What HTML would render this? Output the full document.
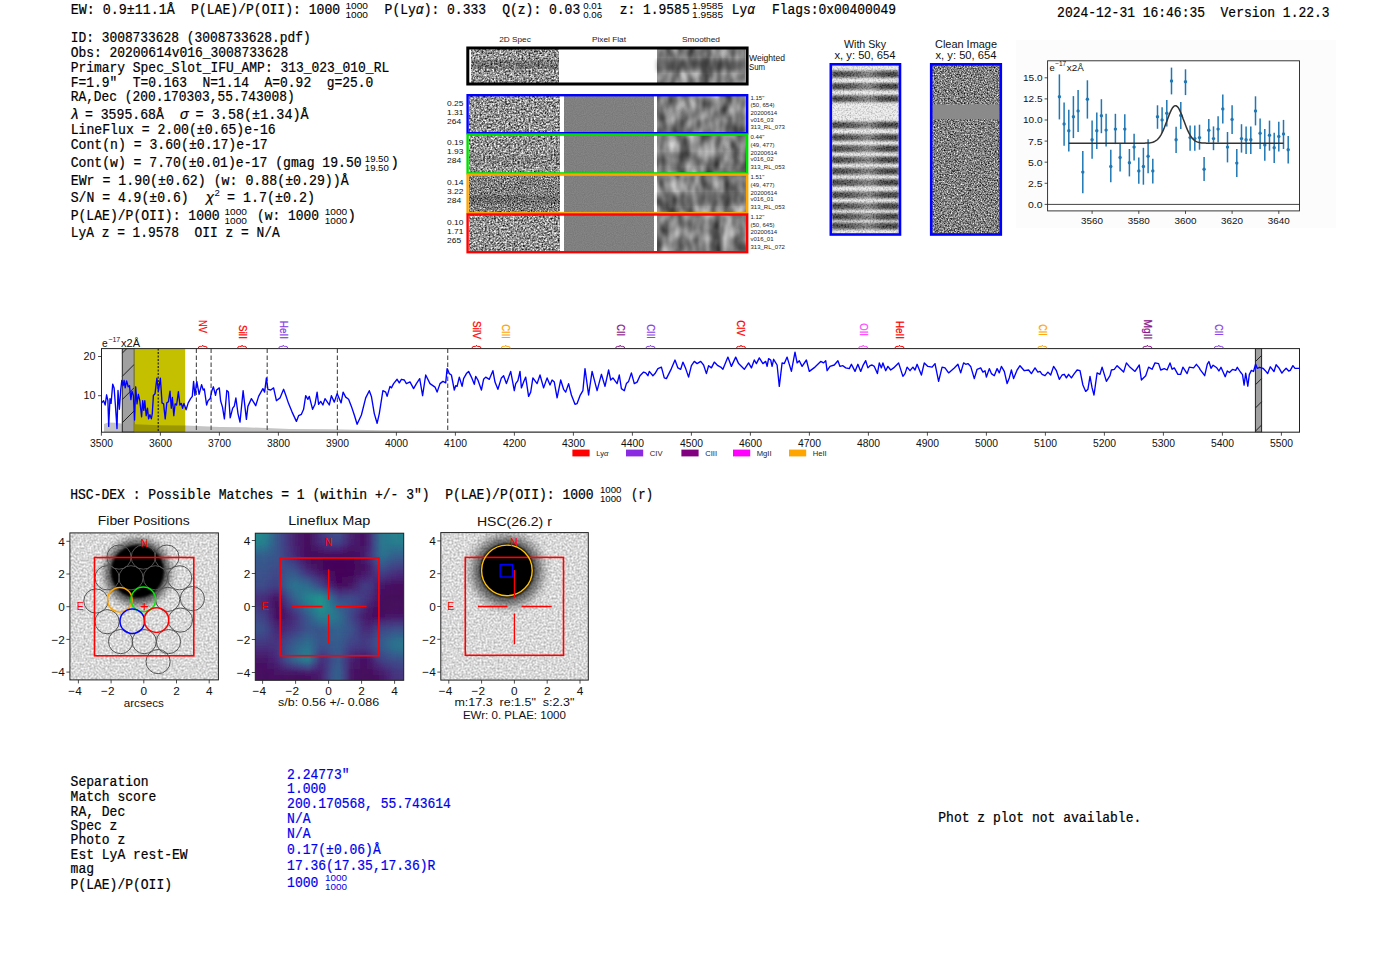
<!DOCTYPE html>
<html><head><meta charset="utf-8"><title>report</title>
<style>html,body{margin:0;padding:0;background:#fff;}body{width:1400px;height:953px;overflow:hidden;}svg{display:block;} text{white-space:pre;}</style>
</head><body>
<svg width="1400" height="953" viewBox="0 0 1400 953">

<defs>
 <filter id="nzA" x="0" y="0" width="1" height="1" color-interpolation-filters="sRGB">
  <feTurbulence type="fractalNoise" baseFrequency="0.55" numOctaves="2" seed="4" result="t"/>
  <feColorMatrix in="t" type="matrix" values="1.5 0 0 0 -0.18  1.5 0 0 0 -0.18  1.5 0 0 0 -0.18  0 0 0 0 1"/>
 </filter>
 <filter id="nzB" x="0" y="0" width="1" height="1" color-interpolation-filters="sRGB">
  <feTurbulence type="fractalNoise" baseFrequency="0.55" numOctaves="2" seed="11" result="t"/>
  <feColorMatrix in="t" type="matrix" values="1.5 0 0 0 -0.18  1.5 0 0 0 -0.18  1.5 0 0 0 -0.18  0 0 0 0 1"/>
 </filter>
 <filter id="nzC" x="0" y="0" width="1" height="1" color-interpolation-filters="sRGB">
  <feTurbulence type="fractalNoise" baseFrequency="0.7" numOctaves="2" seed="21" result="t"/>
  <feColorMatrix in="t" type="matrix" values="1.4 0 0 0 -0.2  1.4 0 0 0 -0.2  1.4 0 0 0 -0.2  0 0 0 0 1"/>
 </filter>
 <filter id="nzL" x="0" y="0" width="1" height="1" color-interpolation-filters="sRGB">
  <feTurbulence type="fractalNoise" baseFrequency="0.5" numOctaves="1" seed="5" result="t"/>
  <feColorMatrix in="t" type="matrix" values="0.5 0 0 0 0.6  0.5 0 0 0 0.6  0.5 0 0 0 0.6  0 0 0 0 1"/>
 </filter>
 <filter id="smA" x="0" y="0" width="1" height="1" color-interpolation-filters="sRGB">
  <feTurbulence type="fractalNoise" baseFrequency="0.09 0.05" numOctaves="2" seed="8" result="t"/>
  <feColorMatrix in="t" type="matrix" values="0.85 0 0 0 0.08  0.85 0 0 0 0.08  0.85 0 0 0 0.08  0 0 0 0 1"/>
 </filter>
 <filter id="smB" x="0" y="0" width="1" height="1" color-interpolation-filters="sRGB">
  <feTurbulence type="fractalNoise" baseFrequency="0.09 0.05" numOctaves="2" seed="15" result="t"/>
  <feColorMatrix in="t" type="matrix" values="0.85 0 0 0 0.08  0.85 0 0 0 0.08  0.85 0 0 0 0.08  0 0 0 0 1"/>
 </filter>
 <filter id="flat" x="0" y="0" width="1" height="1" color-interpolation-filters="sRGB">
  <feTurbulence type="fractalNoise" baseFrequency="0.9" numOctaves="1" seed="2" result="t"/>
  <feColorMatrix in="t" type="matrix" values="0.12 0 0 0 0.44  0.12 0 0 0 0.44  0.12 0 0 0 0.44  0 0 0 0 1"/>
 </filter>
 <filter id="blur2"><feGaussianBlur stdDeviation="2"/></filter>
 <filter id="blur3"><feGaussianBlur stdDeviation="3"/></filter>
 <filter id="blur1"><feGaussianBlur stdDeviation="1.2"/></filter>
 <clipPath id="clipSpec"><rect x="101.5" y="348.6" width="1198" height="83.6"/></clipPath>
 <clipPath id="clipFP"><rect x="69.9" y="532.9" width="148.5" height="147"/></clipPath>
 <clipPath id="clipLF"><rect x="255.3" y="533.2" width="148.4" height="147.1"/></clipPath>
 <clipPath id="clipHSC"><rect x="440.8" y="532.6" width="147.5" height="147.5"/></clipPath>
 <clipPath id="clipFit"><rect x="1047.6" y="60.8" width="251.9" height="150.1"/></clipPath>
 <linearGradient id="skyg" x1="0" x2="1" y1="0" y2="0">
  <stop offset="0" stop-color="#000" stop-opacity="1"/><stop offset="0.3" stop-color="#000" stop-opacity="0.85"/>
  <stop offset="0.55" stop-color="#000" stop-opacity="0.6"/><stop offset="0.75" stop-color="#000" stop-opacity="0.95"/>
  <stop offset="1" stop-color="#000" stop-opacity="1"/></linearGradient>
 <filter id="nzW" x="0" y="0" width="1" height="1" color-interpolation-filters="sRGB">
  <feTurbulence type="fractalNoise" baseFrequency="0.6" numOctaves="2" seed="9" result="t"/>
  <feColorMatrix in="t" type="matrix" values="1.8 0 0 0 -0.05  1.8 0 0 0 -0.05  1.8 0 0 0 -0.05  0 0 0 0 1"/>
 </filter>
</defs>
<rect width="1400" height="953" fill="#fff"/>
<text x="70.7" y="13.9" font-family="'Liberation Mono', monospace" font-size="14.0" textLength="104.0" lengthAdjust="spacingAndGlyphs" stroke="#000" stroke-width="0.22">EW: 0.9±11.1Å</text>
<text x="191.1" y="13.9" font-family="'Liberation Mono', monospace" font-size="14.0" textLength="149.0" lengthAdjust="spacingAndGlyphs" stroke="#000" stroke-width="0.22">P(LAE)/P(OII): 1000</text>
<text x="345.4" y="8.6" font-family="'Liberation Sans', sans-serif" font-size="8.6" textLength="22.5" lengthAdjust="spacingAndGlyphs">1000</text>
<text x="345.4" y="17.5" font-family="'Liberation Sans', sans-serif" font-size="8.6" textLength="22.5" lengthAdjust="spacingAndGlyphs">1000</text>
<text x="384.6" y="13.9" font-family="'Liberation Mono', monospace" font-size="14.0" textLength="101.5" lengthAdjust="spacingAndGlyphs" stroke="#000" stroke-width="0.22">P(Ly<tspan font-style="italic">α</tspan>): 0.333</text>
<text x="502.2" y="13.9" font-family="'Liberation Mono', monospace" font-size="14.0" textLength="78.0" lengthAdjust="spacingAndGlyphs" stroke="#000" stroke-width="0.22">Q(z): 0.03</text>
<text x="583.2" y="8.6" font-family="'Liberation Sans', sans-serif" font-size="8.6" textLength="19.0" lengthAdjust="spacingAndGlyphs">0.01</text>
<text x="583.2" y="17.5" font-family="'Liberation Sans', sans-serif" font-size="8.6" textLength="19.0" lengthAdjust="spacingAndGlyphs">0.06</text>
<text x="619.7" y="13.9" font-family="'Liberation Mono', monospace" font-size="14.0" textLength="70.0" lengthAdjust="spacingAndGlyphs" stroke="#000" stroke-width="0.22">z: 1.9585</text>
<text x="692.1" y="8.6" font-family="'Liberation Sans', sans-serif" font-size="8.6" textLength="31.0" lengthAdjust="spacingAndGlyphs">1.9585</text>
<text x="692.1" y="17.5" font-family="'Liberation Sans', sans-serif" font-size="8.6" textLength="31.0" lengthAdjust="spacingAndGlyphs">1.9585</text>
<text x="731.8" y="13.9" font-family="'Liberation Mono', monospace" font-size="14.0" textLength="23.0" lengthAdjust="spacingAndGlyphs" stroke="#000" stroke-width="0.22">Ly<tspan font-style="italic">α</tspan></text>
<text x="772.0" y="13.9" font-family="'Liberation Mono', monospace" font-size="14.0" textLength="124.0" lengthAdjust="spacingAndGlyphs" stroke="#000" stroke-width="0.22">Flags:0x00400049</text>
<text x="1057.1" y="16.8" font-family="'Liberation Mono', monospace" font-size="14.0" textLength="272.5" lengthAdjust="spacingAndGlyphs" stroke="#000" stroke-width="0.22">2024-12-31 16:46:35  Version 1.22.3</text>
<text x="70.7" y="42.2" font-family="'Liberation Mono', monospace" font-size="14.0" textLength="240.0" lengthAdjust="spacingAndGlyphs" stroke="#000" stroke-width="0.22">ID: 3008733628 (3008733628.pdf)</text>
<text x="70.7" y="56.5" font-family="'Liberation Mono', monospace" font-size="14.0" textLength="217.5" lengthAdjust="spacingAndGlyphs" stroke="#000" stroke-width="0.22">Obs: 20200614v016_3008733628</text>
<text x="70.7" y="71.7" font-family="'Liberation Mono', monospace" font-size="14.0" textLength="318.5" lengthAdjust="spacingAndGlyphs" stroke="#000" stroke-width="0.22">Primary Spec_Slot_IFU_AMP: 313_023_010_RL</text>
<text x="70.7" y="86.7" font-family="'Liberation Mono', monospace" font-size="14.0" textLength="302.5" lengthAdjust="spacingAndGlyphs" stroke="#000" stroke-width="0.22">F=1.9"  T=0.163  N=1.14  A=0.92  g=25.0</text>
<text x="70.7" y="101.3" font-family="'Liberation Mono', monospace" font-size="14.0" textLength="224.0" lengthAdjust="spacingAndGlyphs" stroke="#000" stroke-width="0.22">RA,Dec (200.170303,55.743008)</text>
<text x="70.7" y="118.7" font-family="'Liberation Mono', monospace" font-size="14.0" font-style="italic" stroke="#000" stroke-width="0.22">λ</text>
<text x="84.9" y="118.7" font-family="'Liberation Mono', monospace" font-size="14.0" textLength="79.0" lengthAdjust="spacingAndGlyphs" stroke="#000" stroke-width="0.22">= 3595.68Å</text>
<text x="180.0" y="118.7" font-family="'Liberation Mono', monospace" font-size="14.0" font-style="italic" stroke="#000" stroke-width="0.22">σ</text>
<text x="195.6" y="118.7" font-family="'Liberation Mono', monospace" font-size="14.0" textLength="113.0" lengthAdjust="spacingAndGlyphs" stroke="#000" stroke-width="0.22">= 3.58(±1.34)Å</text>
<text x="70.7" y="133.9" font-family="'Liberation Mono', monospace" font-size="14.0" textLength="205.0" lengthAdjust="spacingAndGlyphs" stroke="#000" stroke-width="0.22">LineFlux = 2.00(±0.65)e-16</text>
<text x="70.7" y="149.1" font-family="'Liberation Mono', monospace" font-size="14.0" textLength="197.0" lengthAdjust="spacingAndGlyphs" stroke="#000" stroke-width="0.22">Cont(n) = 3.60(±0.17)e-17</text>
<text x="70.7" y="167.4" font-family="'Liberation Mono', monospace" font-size="14.0" textLength="291.0" lengthAdjust="spacingAndGlyphs" stroke="#000" stroke-width="0.22">Cont(w) = 7.70(±0.01)e-17 (gmag 19.50</text>
<text x="364.8" y="162.1" font-family="'Liberation Sans', sans-serif" font-size="8.6" textLength="24.0" lengthAdjust="spacingAndGlyphs">19.50</text>
<text x="364.8" y="171.0" font-family="'Liberation Sans', sans-serif" font-size="8.6" textLength="24.0" lengthAdjust="spacingAndGlyphs">19.50</text>
<text x="390.5" y="167.4" font-family="'Liberation Mono', monospace" font-size="14.0" stroke="#000" stroke-width="0.22">)</text>
<text x="70.7" y="184.9" font-family="'Liberation Mono', monospace" font-size="14.0" textLength="278.0" lengthAdjust="spacingAndGlyphs" stroke="#000" stroke-width="0.22">EWr = 1.90(±0.62) (w: 0.88(±0.29))Å</text>
<text x="70.7" y="202.2" font-family="'Liberation Mono', monospace" font-size="14.0" textLength="118.0" lengthAdjust="spacingAndGlyphs" stroke="#000" stroke-width="0.22">S/N = 4.9(±0.6)</text>
<text x="205.7" y="202.2" font-family="'Liberation Mono', monospace" font-size="14.0" font-style="italic" stroke="#000" stroke-width="0.22">χ</text>
<text x="214.5" y="196.0" font-family="'Liberation Sans', sans-serif" font-size="9.6">2</text>
<text x="227.1" y="202.2" font-family="'Liberation Mono', monospace" font-size="14.0" textLength="88.0" lengthAdjust="spacingAndGlyphs" stroke="#000" stroke-width="0.22">= 1.7(±0.2)</text>
<text x="70.7" y="220.4" font-family="'Liberation Mono', monospace" font-size="14.0" textLength="149.0" lengthAdjust="spacingAndGlyphs" stroke="#000" stroke-width="0.22">P(LAE)/P(OII): 1000</text>
<text x="224.4" y="215.1" font-family="'Liberation Sans', sans-serif" font-size="8.6" textLength="22.5" lengthAdjust="spacingAndGlyphs">1000</text>
<text x="224.4" y="224.0" font-family="'Liberation Sans', sans-serif" font-size="8.6" textLength="22.5" lengthAdjust="spacingAndGlyphs">1000</text>
<text x="257.1" y="220.4" font-family="'Liberation Mono', monospace" font-size="14.0" textLength="62.0" lengthAdjust="spacingAndGlyphs" stroke="#000" stroke-width="0.22">(w: 1000</text>
<text x="324.7" y="215.1" font-family="'Liberation Sans', sans-serif" font-size="8.6" textLength="22.5" lengthAdjust="spacingAndGlyphs">1000</text>
<text x="324.7" y="224.0" font-family="'Liberation Sans', sans-serif" font-size="8.6" textLength="22.5" lengthAdjust="spacingAndGlyphs">1000</text>
<text x="347.5" y="220.4" font-family="'Liberation Mono', monospace" font-size="14.0" stroke="#000" stroke-width="0.22">)</text>
<text x="70.7" y="236.7" font-family="'Liberation Mono', monospace" font-size="14.0" textLength="209.0" lengthAdjust="spacingAndGlyphs" stroke="#000" stroke-width="0.22">LyA z = 1.9578  OII z = N/A</text>
<text x="515.0" y="41.6" font-family="'Liberation Sans', sans-serif" font-size="8.0" text-anchor="middle" textLength="31.5" lengthAdjust="spacingAndGlyphs" fill="#222">2D Spec</text>
<text x="609.0" y="41.6" font-family="'Liberation Sans', sans-serif" font-size="8.0" text-anchor="middle" textLength="34.0" lengthAdjust="spacingAndGlyphs" fill="#222">Pixel Flat</text>
<text x="701.0" y="41.6" font-family="'Liberation Sans', sans-serif" font-size="8.0" text-anchor="middle" textLength="38.0" lengthAdjust="spacingAndGlyphs" fill="#222">Smoothed</text>
<rect x="471.7" y="48" width="87.3" height="36" fill="#888" filter="url(#nzA)"/>
<rect x="471.7" y="60" width="87.3" height="9" fill="#000" opacity="0.2"/>
<rect x="657" y="48" width="87.5" height="36" fill="#888" filter="url(#smA)"/>
<rect x="657" y="60" width="87.5" height="11" fill="#000" opacity="0.35" filter="url(#blur2)"/>
<rect x="467.8" y="48" width="279.3" height="36" fill="none" stroke="#000" stroke-width="3"/>
<text x="749.0" y="61.2" font-family="'Liberation Sans', sans-serif" font-size="8.2" textLength="36.0" lengthAdjust="spacingAndGlyphs" fill="#111">Weighted</text>
<text x="749.0" y="69.6" font-family="'Liberation Sans', sans-serif" font-size="8.2" textLength="16.0" lengthAdjust="spacingAndGlyphs" fill="#111">Sum</text>
<rect x="469.5" y="95.1" width="90.5" height="37.2" fill="#888" filter="url(#nzB)"/>
<rect x="564" y="95.1" width="89.5" height="37.2" fill="#808080" filter="url(#flat)"/>
<rect x="657" y="95.1" width="88.5" height="37.2" fill="#888" filter="url(#smB)"/>
<rect x="467.6" y="95.2" width="279.6" height="38.0" fill="none" stroke="#0000ff" stroke-width="2.4"/>
<text x="447.0" y="105.7" font-family="'Liberation Sans', sans-serif" font-size="7.8" textLength="16.4" lengthAdjust="spacingAndGlyphs" fill="#111">0.25</text>
<text x="447.0" y="114.6" font-family="'Liberation Sans', sans-serif" font-size="7.8" textLength="16.4" lengthAdjust="spacingAndGlyphs" fill="#111">1.31</text>
<text x="447.0" y="123.5" font-family="'Liberation Sans', sans-serif" font-size="7.8" textLength="14.1" lengthAdjust="spacingAndGlyphs" fill="#111">264</text>
<text x="750.5" y="99.9" font-family="'Liberation Sans', sans-serif" font-size="6.0" fill="#222">1.15"</text>
<text x="750.5" y="107.2" font-family="'Liberation Sans', sans-serif" font-size="6.0" fill="#222">(50, 654)</text>
<text x="750.5" y="115.1" font-family="'Liberation Sans', sans-serif" font-size="6.0" fill="#222">20200614</text>
<text x="750.5" y="121.9" font-family="'Liberation Sans', sans-serif" font-size="6.0" fill="#222">v016_03</text>
<text x="750.5" y="129.3" font-family="'Liberation Sans', sans-serif" font-size="6.0" fill="#222">313_RL_073</text>
<rect x="469.5" y="134.5" width="90.5" height="38.0" fill="#888" filter="url(#nzA)"/>
<rect x="564" y="134.5" width="89.5" height="38.0" fill="#808080" filter="url(#flat)"/>
<rect x="657" y="134.5" width="88.5" height="38.0" fill="#888" filter="url(#smA)"/>
<rect x="469.5" y="155.5" width="90" height="8.8" fill="#000" opacity="0.08"/>
<rect x="657" y="153.5" width="88" height="11.2" fill="#000" opacity="0.11199999999999999" filter="url(#blur2)"/>
<rect x="467.6" y="134.6" width="279.6" height="38.8" fill="none" stroke="#00e000" stroke-width="2.4"/>
<text x="447.0" y="145.1" font-family="'Liberation Sans', sans-serif" font-size="7.8" textLength="16.4" lengthAdjust="spacingAndGlyphs" fill="#111">0.19</text>
<text x="447.0" y="154.0" font-family="'Liberation Sans', sans-serif" font-size="7.8" textLength="16.4" lengthAdjust="spacingAndGlyphs" fill="#111">1.93</text>
<text x="447.0" y="162.9" font-family="'Liberation Sans', sans-serif" font-size="7.8" textLength="14.1" lengthAdjust="spacingAndGlyphs" fill="#111">284</text>
<text x="750.5" y="139.3" font-family="'Liberation Sans', sans-serif" font-size="6.0" fill="#222">0.44"</text>
<text x="750.5" y="146.6" font-family="'Liberation Sans', sans-serif" font-size="6.0" fill="#222">(49, 477)</text>
<text x="750.5" y="154.5" font-family="'Liberation Sans', sans-serif" font-size="6.0" fill="#222">20200614</text>
<text x="750.5" y="161.3" font-family="'Liberation Sans', sans-serif" font-size="6.0" fill="#222">v016_02</text>
<text x="750.5" y="168.7" font-family="'Liberation Sans', sans-serif" font-size="6.0" fill="#222">313_RL_053</text>
<rect x="469.5" y="174.5" width="90.5" height="37.7" fill="#888" filter="url(#nzC)"/>
<rect x="564" y="174.5" width="89.5" height="37.7" fill="#808080" filter="url(#flat)"/>
<rect x="657" y="174.5" width="88.5" height="37.7" fill="#888" filter="url(#smB)"/>
<rect x="469.5" y="195.3" width="90" height="8.7" fill="#000" opacity="0.15"/>
<rect x="657" y="193.3" width="88" height="11.1" fill="#000" opacity="0.21" filter="url(#blur2)"/>
<rect x="467.6" y="174.6" width="279.6" height="38.5" fill="none" stroke="#ffa500" stroke-width="2.4"/>
<text x="447.0" y="185.1" font-family="'Liberation Sans', sans-serif" font-size="7.8" textLength="16.4" lengthAdjust="spacingAndGlyphs" fill="#111">0.14</text>
<text x="447.0" y="194.0" font-family="'Liberation Sans', sans-serif" font-size="7.8" textLength="16.4" lengthAdjust="spacingAndGlyphs" fill="#111">3.22</text>
<text x="447.0" y="202.9" font-family="'Liberation Sans', sans-serif" font-size="7.8" textLength="14.1" lengthAdjust="spacingAndGlyphs" fill="#111">284</text>
<text x="750.5" y="179.3" font-family="'Liberation Sans', sans-serif" font-size="6.0" fill="#222">1.51"</text>
<text x="750.5" y="186.6" font-family="'Liberation Sans', sans-serif" font-size="6.0" fill="#222">(49, 477)</text>
<text x="750.5" y="194.5" font-family="'Liberation Sans', sans-serif" font-size="6.0" fill="#222">20200614</text>
<text x="750.5" y="201.3" font-family="'Liberation Sans', sans-serif" font-size="6.0" fill="#222">v016_01</text>
<text x="750.5" y="208.7" font-family="'Liberation Sans', sans-serif" font-size="6.0" fill="#222">313_RL_053</text>
<rect x="469.5" y="214.4" width="90.5" height="36.9" fill="#888" filter="url(#nzB)"/>
<rect x="564" y="214.4" width="89.5" height="36.9" fill="#808080" filter="url(#flat)"/>
<rect x="657" y="214.4" width="88.5" height="36.9" fill="#888" filter="url(#smA)"/>
<rect x="467.6" y="214.5" width="279.6" height="37.7" fill="none" stroke="#ff0000" stroke-width="2.4"/>
<text x="447.0" y="225.0" font-family="'Liberation Sans', sans-serif" font-size="7.8" textLength="16.4" lengthAdjust="spacingAndGlyphs" fill="#111">0.10</text>
<text x="447.0" y="233.9" font-family="'Liberation Sans', sans-serif" font-size="7.8" textLength="16.4" lengthAdjust="spacingAndGlyphs" fill="#111">1.71</text>
<text x="447.0" y="242.8" font-family="'Liberation Sans', sans-serif" font-size="7.8" textLength="14.1" lengthAdjust="spacingAndGlyphs" fill="#111">265</text>
<text x="750.5" y="219.2" font-family="'Liberation Sans', sans-serif" font-size="6.0" fill="#222">1.12"</text>
<text x="750.5" y="226.5" font-family="'Liberation Sans', sans-serif" font-size="6.0" fill="#222">(50, 645)</text>
<text x="750.5" y="234.4" font-family="'Liberation Sans', sans-serif" font-size="6.0" fill="#222">20200614</text>
<text x="750.5" y="241.2" font-family="'Liberation Sans', sans-serif" font-size="6.0" fill="#222">v016_01</text>
<text x="750.5" y="248.6" font-family="'Liberation Sans', sans-serif" font-size="6.0" fill="#222">313_RL_072</text>
<text x="865.0" y="48.3" font-family="'Liberation Sans', sans-serif" font-size="10.4" text-anchor="middle" textLength="42.0" lengthAdjust="spacingAndGlyphs" fill="#111">With Sky</text>
<text x="865.0" y="58.5" font-family="'Liberation Sans', sans-serif" font-size="10.4" text-anchor="middle" textLength="61.0" lengthAdjust="spacingAndGlyphs" fill="#111">x, y: 50, 654</text>
<text x="966.0" y="48.3" font-family="'Liberation Sans', sans-serif" font-size="10.4" text-anchor="middle" textLength="62.0" lengthAdjust="spacingAndGlyphs" fill="#111">Clean Image</text>
<text x="966.0" y="58.5" font-family="'Liberation Sans', sans-serif" font-size="10.4" text-anchor="middle" textLength="61.0" lengthAdjust="spacingAndGlyphs" fill="#111">x, y: 50, 654</text>
<rect x="832" y="64.8" width="66.8" height="168.8" fill="#e8e8e8"/>
<g filter="url(#blur1)"><rect x="832" y="70.8" width="66.8" height="6.8" fill="url(#skyg)"/><rect x="832" y="83.0" width="66.8" height="6.8" fill="url(#skyg)"/><rect x="832" y="95.3" width="66.8" height="6.8" fill="url(#skyg)"/><rect x="832" y="121.7" width="66.8" height="6.8" fill="url(#skyg)"/><rect x="832" y="134.0" width="66.8" height="6.8" fill="url(#skyg)"/><rect x="832" y="145.3" width="66.8" height="6.8" fill="url(#skyg)"/><rect x="832" y="156.6" width="66.8" height="6.8" fill="url(#skyg)"/><rect x="832" y="167.9" width="66.8" height="6.8" fill="url(#skyg)"/><rect x="832" y="179.2" width="66.8" height="6.8" fill="url(#skyg)"/><rect x="832" y="191.5" width="66.8" height="6.8" fill="url(#skyg)"/><rect x="832" y="202.8" width="66.8" height="6.8" fill="url(#skyg)"/><rect x="832" y="213.2" width="66.8" height="6.8" fill="url(#skyg)"/><rect x="832" y="222.6" width="66.8" height="6.8" fill="url(#skyg)"/></g>
<rect x="832" y="64.8" width="66.8" height="168.8" fill="#888" filter="url(#nzW)" opacity="0.32"/>
<rect x="830.8" y="64.3" width="69.2" height="170.2" fill="none" stroke="#0000ff" stroke-width="2.6"/>
<rect x="932.3" y="64.8" width="67.5" height="168.8" fill="#888" filter="url(#nzC)"/>
<rect x="932.3" y="104.5" width="67.5" height="14.5" fill="#8a8a8a"/>
<rect x="931.2" y="64.3" width="69.6" height="170.2" fill="none" stroke="#0000ff" stroke-width="2.6"/>
<rect x="1016" y="40" width="320" height="188" fill="#fcfcfc"/>
<rect x="1047.6" y="60.8" width="251.9" height="150.1" fill="#fff"/>
<line x1="1047.6" y1="204.4" x2="1299.5" y2="204.4" stroke="#444" stroke-width="1"/>
<g stroke="#1f77b4" stroke-width="1.5"><line x1="1059.4" y1="74.4" x2="1059.4" y2="119.4"/><line x1="1064.1" y1="102.4" x2="1064.1" y2="145.8"/><line x1="1068.8" y1="109.7" x2="1068.8" y2="151.4"/><line x1="1073.4" y1="96.1" x2="1073.4" y2="138.1"/><line x1="1078.1" y1="90.0" x2="1078.1" y2="132.0"/><line x1="1082.8" y1="150.9" x2="1082.8" y2="193.2"/><line x1="1087.4" y1="80.3" x2="1087.4" y2="118.6"/><line x1="1092.1" y1="120.6" x2="1092.1" y2="158.7"/><line x1="1096.8" y1="112.6" x2="1096.8" y2="149.0"/><line x1="1101.4" y1="99.2" x2="1101.4" y2="133.2"/><line x1="1106.1" y1="113.8" x2="1106.1" y2="146.6"/><line x1="1110.8" y1="149.7" x2="1110.8" y2="182.3"/><line x1="1115.4" y1="113.8" x2="1115.4" y2="144.1"/><line x1="1120.1" y1="143.4" x2="1120.1" y2="171.6"/><line x1="1124.8" y1="114.3" x2="1124.8" y2="143.4"/><line x1="1129.4" y1="149.0" x2="1129.4" y2="176.4"/><line x1="1134.1" y1="133.7" x2="1134.1" y2="160.4"/><line x1="1138.8" y1="157.5" x2="1138.8" y2="183.7"/><line x1="1143.4" y1="147.8" x2="1143.4" y2="184.7"/><line x1="1148.1" y1="139.3" x2="1148.1" y2="173.3"/><line x1="1152.8" y1="158.7" x2="1152.8" y2="183.5"/><line x1="1157.5" y1="105.3" x2="1157.5" y2="128.8"/><line x1="1162.1" y1="107.2" x2="1162.1" y2="132.7"/><line x1="1166.8" y1="99.9" x2="1166.8" y2="126.4"/><line x1="1171.5" y1="67.6" x2="1171.5" y2="94.4"/><line x1="1176.1" y1="126.7" x2="1176.1" y2="153.1"/><line x1="1180.8" y1="102.1" x2="1180.8" y2="129.1"/><line x1="1185.5" y1="69.3" x2="1185.5" y2="95.1"/><line x1="1190.1" y1="125.4" x2="1190.1" y2="150.7"/><line x1="1194.8" y1="125.4" x2="1194.8" y2="150.7"/><line x1="1199.5" y1="124.7" x2="1199.5" y2="149.7"/><line x1="1204.1" y1="157.0" x2="1204.1" y2="181.1"/><line x1="1208.8" y1="119.1" x2="1208.8" y2="142.4"/><line x1="1213.5" y1="126.4" x2="1213.5" y2="150.2"/><line x1="1218.1" y1="116.2" x2="1218.1" y2="142.4"/><line x1="1222.8" y1="94.4" x2="1222.8" y2="123.5"/><line x1="1227.5" y1="132.0" x2="1227.5" y2="162.4"/><line x1="1232.1" y1="105.3" x2="1232.1" y2="133.9"/><line x1="1236.8" y1="149.0" x2="1236.8" y2="176.9"/><line x1="1241.5" y1="124.2" x2="1241.5" y2="152.6"/><line x1="1246.1" y1="126.4" x2="1246.1" y2="153.9"/><line x1="1250.8" y1="126.4" x2="1250.8" y2="153.9"/><line x1="1255.5" y1="96.3" x2="1255.5" y2="125.4"/><line x1="1260.1" y1="118.6" x2="1260.1" y2="149.0"/><line x1="1264.8" y1="129.1" x2="1264.8" y2="160.7"/><line x1="1269.5" y1="120.6" x2="1269.5" y2="150.7"/><line x1="1274.2" y1="132.7" x2="1274.2" y2="163.1"/><line x1="1278.8" y1="121.8" x2="1278.8" y2="151.4"/><line x1="1283.5" y1="119.9" x2="1283.5" y2="149.0"/><line x1="1288.2" y1="136.1" x2="1288.2" y2="163.6"/></g>
<g fill="#1f77b4"><circle cx="1059.4" cy="96.8" r="1.7"/><circle cx="1064.1" cy="124.0" r="1.7"/><circle cx="1068.8" cy="130.8" r="1.7"/><circle cx="1073.4" cy="116.7" r="1.7"/><circle cx="1078.1" cy="110.9" r="1.7"/><circle cx="1082.8" cy="172.1" r="1.7"/><circle cx="1087.4" cy="99.2" r="1.7"/><circle cx="1092.1" cy="139.8" r="1.7"/><circle cx="1096.8" cy="130.8" r="1.7"/><circle cx="1101.4" cy="115.7" r="1.7"/><circle cx="1106.1" cy="130.1" r="1.7"/><circle cx="1110.8" cy="166.5" r="1.7"/><circle cx="1115.4" cy="129.1" r="1.7"/><circle cx="1120.1" cy="157.5" r="1.7"/><circle cx="1124.8" cy="129.1" r="1.7"/><circle cx="1129.4" cy="162.8" r="1.7"/><circle cx="1134.1" cy="147.1" r="1.7"/><circle cx="1138.8" cy="170.9" r="1.7"/><circle cx="1143.4" cy="166.5" r="1.7"/><circle cx="1148.1" cy="156.3" r="1.7"/><circle cx="1152.8" cy="170.9" r="1.7"/><circle cx="1157.5" cy="116.7" r="1.7"/><circle cx="1162.1" cy="119.9" r="1.7"/><circle cx="1166.8" cy="113.3" r="1.7"/><circle cx="1171.5" cy="81.0" r="1.7"/><circle cx="1176.1" cy="139.8" r="1.7"/><circle cx="1180.8" cy="115.5" r="1.7"/><circle cx="1185.5" cy="81.7" r="1.7"/><circle cx="1190.1" cy="137.6" r="1.7"/><circle cx="1194.8" cy="138.6" r="1.7"/><circle cx="1199.5" cy="137.6" r="1.7"/><circle cx="1204.1" cy="169.2" r="1.7"/><circle cx="1208.8" cy="130.3" r="1.7"/><circle cx="1213.5" cy="138.6" r="1.7"/><circle cx="1218.1" cy="129.1" r="1.7"/><circle cx="1222.8" cy="108.9" r="1.7"/><circle cx="1227.5" cy="147.1" r="1.7"/><circle cx="1232.1" cy="119.4" r="1.7"/><circle cx="1236.8" cy="163.1" r="1.7"/><circle cx="1241.5" cy="138.6" r="1.7"/><circle cx="1246.1" cy="139.8" r="1.7"/><circle cx="1250.8" cy="139.8" r="1.7"/><circle cx="1255.5" cy="110.9" r="1.7"/><circle cx="1260.1" cy="133.2" r="1.7"/><circle cx="1264.8" cy="144.9" r="1.7"/><circle cx="1269.5" cy="135.2" r="1.7"/><circle cx="1274.2" cy="147.8" r="1.7"/><circle cx="1278.8" cy="136.4" r="1.7"/><circle cx="1283.5" cy="133.9" r="1.7"/><circle cx="1288.2" cy="149.7" r="1.7"/></g>
<polyline fill="none" stroke="#333" stroke-width="1.5" points="1068.8,143.2 1069.9,143.2 1071.1,143.2 1072.3,143.2 1073.4,143.2 1074.6,143.2 1075.8,143.2 1076.9,143.2 1078.1,143.2 1079.3,143.2 1080.4,143.2 1081.6,143.2 1082.8,143.2 1083.9,143.2 1085.1,143.2 1086.3,143.2 1087.4,143.2 1088.6,143.2 1089.8,143.2 1090.9,143.2 1092.1,143.2 1093.3,143.2 1094.4,143.2 1095.6,143.2 1096.8,143.2 1097.9,143.2 1099.1,143.2 1100.3,143.2 1101.4,143.2 1102.6,143.2 1103.8,143.2 1104.9,143.2 1106.1,143.2 1107.3,143.2 1108.4,143.2 1109.6,143.2 1110.8,143.2 1111.9,143.2 1113.1,143.2 1114.3,143.2 1115.4,143.2 1116.6,143.2 1117.8,143.2 1118.9,143.2 1120.1,143.2 1121.3,143.2 1122.4,143.2 1123.6,143.2 1124.8,143.2 1125.9,143.2 1127.1,143.2 1128.3,143.2 1129.4,143.2 1130.6,143.2 1131.8,143.2 1132.9,143.2 1134.1,143.2 1135.3,143.2 1136.4,143.2 1137.6,143.2 1138.8,143.2 1139.9,143.2 1141.1,143.2 1142.3,143.2 1143.4,143.2 1144.6,143.2 1145.8,143.1 1146.9,143.1 1148.1,143.0 1149.3,142.9 1150.4,142.8 1151.6,142.6 1152.8,142.3 1154.0,141.8 1155.1,141.2 1156.3,140.5 1157.5,139.5 1158.6,138.2 1159.8,136.7 1161.0,134.8 1162.1,132.6 1163.3,130.1 1164.5,127.3 1165.6,124.3 1166.8,121.2 1168.0,118.0 1169.1,114.9 1170.3,112.1 1171.5,109.7 1172.6,107.7 1173.8,106.4 1175.0,105.7 1176.1,105.8 1177.3,106.6 1178.5,108.0 1179.6,110.1 1180.8,112.7 1182.0,115.5 1183.1,118.7 1184.3,121.8 1185.5,125.0 1186.6,127.9 1187.8,130.7 1189.0,133.1 1190.1,135.2 1191.3,137.0 1192.5,138.5 1193.6,139.7 1194.8,140.7 1196.0,141.4 1197.1,141.9 1198.3,142.3 1199.5,142.6 1200.6,142.8 1201.8,143.0 1203.0,143.0 1204.1,143.1 1205.3,143.1 1206.5,143.2 1207.6,143.2 1208.8,143.2 1210.0,143.2 1211.1,143.2 1212.3,143.2 1213.5,143.2 1214.6,143.2 1215.8,143.2 1217.0,143.2 1218.1,143.2 1219.3,143.2 1220.5,143.2 1221.6,143.2 1222.8,143.2 1224.0,143.2 1225.1,143.2 1226.3,143.2 1227.5,143.2 1228.6,143.2 1229.8,143.2 1231.0,143.2 1232.1,143.2 1233.3,143.2 1234.5,143.2 1235.6,143.2 1236.8,143.2 1238.0,143.2 1239.1,143.2 1240.3,143.2 1241.5,143.2 1242.6,143.2 1243.8,143.2 1245.0,143.2 1246.1,143.2 1247.3,143.2 1248.5,143.2 1249.6,143.2 1250.8,143.2 1252.0,143.2 1253.1,143.2 1254.3,143.2 1255.5,143.2 1256.6,143.2 1257.8,143.2 1259.0,143.2 1260.1,143.2 1261.3,143.2 1262.5,143.2 1263.6,143.2 1264.8,143.2 1266.0,143.2 1267.1,143.2 1268.3,143.2 1269.5,143.2 1270.7,143.2 1271.8,143.2 1273.0,143.2 1274.2,143.2 1275.3,143.2 1276.5,143.2 1277.7,143.2 1278.8,143.2 1280.0,143.2 1281.2,143.2 1282.3,143.2 1283.5,143.2"/>
<rect x="1047.6" y="60.8" width="251.9" height="150.1" fill="none" stroke="#222" stroke-width="0.9"/>
<line x1="1044.6" y1="204.4" x2="1047.6" y2="204.4" stroke="#222" stroke-width="0.8"/>
<text x="1042.5" y="207.8" font-family="'Liberation Sans', sans-serif" font-size="9.6" text-anchor="end" textLength="14.5" lengthAdjust="spacingAndGlyphs" fill="#111">0.0</text>
<line x1="1044.6" y1="183.3" x2="1047.6" y2="183.3" stroke="#222" stroke-width="0.8"/>
<text x="1042.5" y="186.7" font-family="'Liberation Sans', sans-serif" font-size="9.6" text-anchor="end" textLength="14.5" lengthAdjust="spacingAndGlyphs" fill="#111">2.5</text>
<line x1="1044.6" y1="162.2" x2="1047.6" y2="162.2" stroke="#222" stroke-width="0.8"/>
<text x="1042.5" y="165.6" font-family="'Liberation Sans', sans-serif" font-size="9.6" text-anchor="end" textLength="14.5" lengthAdjust="spacingAndGlyphs" fill="#111">5.0</text>
<line x1="1044.6" y1="141.1" x2="1047.6" y2="141.1" stroke="#222" stroke-width="0.8"/>
<text x="1042.5" y="144.5" font-family="'Liberation Sans', sans-serif" font-size="9.6" text-anchor="end" textLength="14.5" lengthAdjust="spacingAndGlyphs" fill="#111">7.5</text>
<line x1="1044.6" y1="120.0" x2="1047.6" y2="120.0" stroke="#222" stroke-width="0.8"/>
<text x="1042.5" y="123.4" font-family="'Liberation Sans', sans-serif" font-size="9.6" text-anchor="end" textLength="19.5" lengthAdjust="spacingAndGlyphs" fill="#111">10.0</text>
<line x1="1044.6" y1="98.9" x2="1047.6" y2="98.9" stroke="#222" stroke-width="0.8"/>
<text x="1042.5" y="102.3" font-family="'Liberation Sans', sans-serif" font-size="9.6" text-anchor="end" textLength="19.5" lengthAdjust="spacingAndGlyphs" fill="#111">12.5</text>
<line x1="1044.6" y1="77.8" x2="1047.6" y2="77.8" stroke="#222" stroke-width="0.8"/>
<text x="1042.5" y="81.2" font-family="'Liberation Sans', sans-serif" font-size="9.6" text-anchor="end" textLength="19.5" lengthAdjust="spacingAndGlyphs" fill="#111">15.0</text>
<line x1="1092.1" y1="210.9" x2="1092.1" y2="213.9" stroke="#222" stroke-width="0.8"/>
<text x="1092.1" y="224.2" font-family="'Liberation Sans', sans-serif" font-size="9.6" text-anchor="middle" textLength="22.0" lengthAdjust="spacingAndGlyphs" fill="#111">3560</text>
<line x1="1138.8" y1="210.9" x2="1138.8" y2="213.9" stroke="#222" stroke-width="0.8"/>
<text x="1138.8" y="224.2" font-family="'Liberation Sans', sans-serif" font-size="9.6" text-anchor="middle" textLength="22.0" lengthAdjust="spacingAndGlyphs" fill="#111">3580</text>
<line x1="1185.5" y1="210.9" x2="1185.5" y2="213.9" stroke="#222" stroke-width="0.8"/>
<text x="1185.5" y="224.2" font-family="'Liberation Sans', sans-serif" font-size="9.6" text-anchor="middle" textLength="22.0" lengthAdjust="spacingAndGlyphs" fill="#111">3600</text>
<line x1="1232.1" y1="210.9" x2="1232.1" y2="213.9" stroke="#222" stroke-width="0.8"/>
<text x="1232.1" y="224.2" font-family="'Liberation Sans', sans-serif" font-size="9.6" text-anchor="middle" textLength="22.0" lengthAdjust="spacingAndGlyphs" fill="#111">3620</text>
<line x1="1278.8" y1="210.9" x2="1278.8" y2="213.9" stroke="#222" stroke-width="0.8"/>
<text x="1278.8" y="224.2" font-family="'Liberation Sans', sans-serif" font-size="9.6" text-anchor="middle" textLength="22.0" lengthAdjust="spacingAndGlyphs" fill="#111">3640</text>
<text x="1049.5" y="70.7" font-family="'Liberation Sans', sans-serif" font-size="9.4" fill="#111">e</text>
<text x="1055.2" y="66.2" font-family="'Liberation Sans', sans-serif" font-size="6.6" textLength="11.0" lengthAdjust="spacingAndGlyphs" fill="#111">−17</text>
<text x="1066.8" y="70.7" font-family="'Liberation Sans', sans-serif" font-size="9.4" textLength="17.0" lengthAdjust="spacingAndGlyphs" fill="#111">x2Å</text>
<g clip-path="url(#clipSpec)">
<polygon fill="#c4c4c4" points="101.5,432.2 104.0,432.2 104.0,424.0 108.0,422.5 115.0,422.8 125.0,424.0 140.0,424.5 160.0,425.3 185.0,425.6 220.0,427.0 245.0,427.2 290.0,429.0 330.0,429.3 380.0,430.3 440.0,430.8 560.0,431.2 800.0,431.5 1299.5,431.7 1299.5,432.2"/>
<rect x="122.3" y="348.6" width="12.0" height="83.6" fill="#a0a0a0" stroke="#222" stroke-width="1"/>
<g stroke="#222" stroke-width="1"><line x1="122.3" y1="422.7" x2="134.3" y2="410.7"/><line x1="122.3" y1="399.5" x2="134.3" y2="387.5"/><line x1="122.3" y1="376.3" x2="134.3" y2="364.3"/><line x1="122.3" y1="353.1" x2="134.3" y2="341.1"/><line x1="122.3" y1="329.9" x2="134.3" y2="317.9"/></g>
<rect x="134.5" y="348.6" width="50.7" height="83.6" fill="#c4c000"/>
<polygon fill="#9a9700" points="134.5,432.2 134.5,424.3 160,425.3 185.2,425.6 185.2,432.2"/>
<rect x="1255.4" y="348.6" width="6.2" height="83.6" fill="#a0a0a0" stroke="#222" stroke-width="1"/>
<g stroke="#222" stroke-width="1"><line x1="1255.4" y1="431.2" x2="1261.6" y2="425.0"/><line x1="1255.4" y1="408.0" x2="1261.6" y2="401.8"/><line x1="1255.4" y1="384.8" x2="1261.6" y2="378.6"/><line x1="1255.4" y1="361.6" x2="1261.6" y2="355.4"/><line x1="1255.4" y1="338.4" x2="1261.6" y2="332.2"/></g>
<line x1="196.4" y1="348.6" x2="196.4" y2="432.2" stroke="#555" stroke-width="1.2" stroke-dasharray="4.5,2.5"/>
<line x1="211.1" y1="348.6" x2="211.1" y2="432.2" stroke="#555" stroke-width="1.2" stroke-dasharray="4.5,2.5"/>
<line x1="267.2" y1="348.6" x2="267.2" y2="432.2" stroke="#555" stroke-width="1.2" stroke-dasharray="4.5,2.5"/>
<line x1="337.4" y1="348.6" x2="337.4" y2="432.2" stroke="#555" stroke-width="1.2" stroke-dasharray="4.5,2.5"/>
<line x1="447.7" y1="348.6" x2="447.7" y2="432.2" stroke="#555" stroke-width="1.2" stroke-dasharray="4.5,2.5"/>
<line x1="158.2" y1="348.6" x2="158.2" y2="432.2" stroke="#111" stroke-width="1.1" stroke-dasharray="2,1.5"/>
<polyline fill="none" stroke="#0000ff" stroke-width="1.35" stroke-linejoin="round" points="101.6,402.9 103.6,400.7 105.2,405.0 106.6,394.8 107.9,400.7 108.7,426.4 110.0,398.6 111.1,403.4 112.7,384.1 114.1,387.9 115.4,405.0 117.0,428.6 118.0,390.5 119.4,409.3 120.7,390.0 121.8,380.4 123.1,385.7 124.1,380.4 125.2,387.9 126.6,380.9 128.2,386.8 129.5,385.7 130.9,399.6 132.0,391.1 133.4,395.4 134.6,420.0 135.7,386.8 137.0,403.9 138.4,394.3 139.8,400.7 141.6,416.8 142.7,400.7 143.8,410.4 144.8,400.7 146.2,415.7 147.5,408.2 148.6,418.9 149.9,414.6 151.3,418.9 152.3,413.6 153.4,395.4 155.0,393.8 156.9,378.2 158.4,391.1 160.4,378.2 162.0,402.9 163.6,403.9 165.2,418.9 166.8,402.9 168.4,401.8 170.0,391.1 171.3,408.2 172.4,397.5 173.8,415.7 175.1,403.9 176.6,405.0 178.4,391.6 179.9,405.0 181.3,403.4 182.6,408.2 183.9,403.4 186.1,409.8 188.2,402.9 190.6,398.6 192.3,396.4 193.6,381.4 194.9,395.4 196.8,381.4 199.1,394.3 201.6,384.6 203.2,390.0 204.3,388.9 206.6,405.0 208.0,400.7 210.2,398.6 211.8,391.1 213.4,386.8 215.5,395.4 216.6,390.0 219.3,387.9 220.6,400.7 222.5,407.1 224.4,418.9 226.8,390.5 228.4,392.1 230.2,417.9 232.7,408.2 234.3,406.1 235.9,398.0 238.0,413.6 240.0,422.1 243.1,390.7 246.4,419.3 247.9,406.4 251.4,398.6 253.6,402.1 255.7,405.7 258.6,396.4 262.9,388.6 264.6,392.1 266.4,377.9 267.9,389.3 270.7,390.0 273.6,387.9 276.4,400.7 280.0,397.9 283.6,389.3 285.7,395.0 288.6,403.6 292.1,412.1 296.4,421.4 298.6,415.7 301.4,414.3 303.6,409.3 305.7,395.7 307.9,399.3 309.3,396.4 312.6,409.3 315.0,404.3 317.1,392.1 318.6,404.3 320.7,401.4 322.9,405.0 325.0,398.6 327.4,402.1 329.3,405.0 331.4,395.7 334.3,402.1 337.1,393.6 341.1,402.9 343.1,392.1 345.7,397.1 348.6,399.3 351.4,406.4 354.3,415.0 357.1,424.3 361.4,415.0 365.7,397.9 369.3,390.7 371.4,396.4 374.3,413.6 377.1,423.3 379.3,413.6 382.9,390.7 385.7,392.1 387.1,396.4 390.0,386.4 391.4,387.9 393.6,383.6 397.1,379.3 399.3,382.9 401.4,379.3 404.3,380.0 406.4,383.6 410.0,381.9 413.6,388.6 416.4,383.6 419.7,378.6 422.6,395.7 425.7,375.0 430.0,383.6 435.0,387.1 437.1,392.1 440.0,383.6 442.9,381.4 445.7,382.9 447.1,368.6 449.3,373.6 451.4,375.0 454.3,390.0 455.7,385.7 457.1,386.4 459.3,377.1 462.1,386.4 463.6,378.6 466.4,373.6 468.6,371.4 471.4,377.1 474.3,384.3 475.7,376.4 477.9,380.0 481.4,390.0 483.6,379.3 485.7,377.1 489.3,379.3 492.9,370.7 495.0,382.1 497.9,389.3 501.4,377.9 503.6,375.7 506.4,383.6 510.7,371.4 514.3,390.7 515.7,383.6 517.9,380.7 520.0,371.4 521.4,387.9 523.6,382.1 525.7,377.1 528.6,396.4 530.7,392.1 532.9,377.9 537.1,383.6 540.0,375.0 543.6,387.9 547.1,377.9 550.0,385.0 552.1,380.0 554.3,382.1 557.1,397.9 560.7,380.0 563.6,389.3 565.7,392.1 568.6,383.6 571.4,395.0 575.0,404.3 577.1,403.6 580.0,395.7 582.9,390.7 585.0,368.6 588.6,395.0 592.1,371.4 597.1,390.7 601.4,374.3 605.0,386.4 608.6,370.0 610.7,380.0 612.9,377.9 617.1,383.6 619.3,375.0 621.4,388.6 624.3,390.7 626.4,383.6 628.6,381.4 631.4,372.9 634.3,383.6 637.1,382.1 640.0,375.7 643.6,372.1 645.7,372.9 647.9,375.7 649.3,371.4 652.9,375.7 655.0,373.6 657.9,368.6 661.4,367.1 664.3,377.9 666.4,378.6 671.4,368.6 675.0,360.0 677.9,367.9 680.7,369.3 682.9,362.1 685.7,368.6 688.6,377.1 691.4,365.7 694.3,361.4 697.1,363.6 700.7,361.4 703.6,365.0 706.4,373.6 708.6,365.7 711.4,367.9 714.3,362.1 717.9,365.7 720.7,367.1 722.9,369.3 727.9,357.1 731.4,366.4 735.7,357.1 738.6,363.6 744.3,369.3 748.6,362.9 751.4,367.9 754.3,360.0 756.4,363.6 759.3,357.9 762.9,363.6 765.7,361.4 767.1,366.4 768.6,358.6 770.7,360.0 772.1,366.4 773.6,359.3 777.1,365.0 779.3,386.4 782.1,362.9 784.3,363.6 787.1,357.1 791.4,371.4 795.0,352.1 797.1,362.9 799.3,360.7 802.1,366.4 806.4,360.0 809.3,371.4 815.0,367.1 820.7,361.4 823.6,362.9 825.7,360.7 827.1,370.7 830.0,366.4 834.3,365.0 837.9,360.7 840.0,366.4 842.9,365.7 845.7,367.9 849.3,368.6 851.4,364.3 855.0,371.4 857.9,364.3 860.7,371.4 862.9,365.7 865.7,360.7 867.9,367.9 870.0,365.7 872.1,365.0 874.3,366.4 877.4,373.6 879.3,362.9 881.4,367.9 882.9,362.9 885.7,370.7 887.9,366.4 890.7,370.0 893.6,367.9 898.6,362.9 902.9,376.4 905.0,373.6 907.1,367.1 910.0,370.7 912.9,367.1 915.0,370.0 917.1,364.3 921.4,375.0 924.3,362.9 927.9,366.4 932.1,367.1 935.0,363.6 938.6,381.4 942.1,367.1 945.0,367.9 948.6,372.9 954.3,367.9 957.9,364.3 960.7,372.9 963.6,362.9 965.7,364.3 967.9,363.6 970.7,366.4 974.3,378.6 977.1,369.3 980.7,367.9 982.9,372.1 985.0,370.7 986.4,377.1 989.3,368.6 991.4,373.6 994.3,375.7 997.1,368.6 999.3,372.9 1001.4,366.4 1004.3,371.4 1007.1,383.6 1009.3,377.9 1011.4,370.0 1013.6,378.6 1017.1,370.0 1020.0,365.7 1024.3,370.7 1028.6,370.0 1031.4,373.6 1035.0,367.9 1037.9,372.1 1040.0,371.4 1042.1,374.3 1045.0,375.7 1047.9,372.1 1050.7,375.0 1053.6,366.4 1056.4,370.7 1059.3,379.3 1062.1,375.0 1064.3,374.3 1066.4,377.9 1068.6,374.3 1071.4,377.9 1074.3,373.6 1077.1,370.0 1080.0,370.7 1082.9,385.0 1085.7,391.4 1087.9,389.3 1090.0,376.4 1092.1,387.9 1094.0,395.0 1097.1,372.9 1100.0,374.3 1102.1,367.1 1106.4,381.4 1110.0,375.7 1111.4,370.0 1114.3,369.3 1117.1,365.7 1120.0,368.6 1123.6,372.1 1126.4,362.9 1129.3,366.4 1135.0,371.4 1139.3,365.0 1141.4,380.0 1145.7,375.7 1148.6,367.1 1152.1,369.3 1155.0,362.9 1158.6,363.6 1160.7,370.0 1164.3,368.6 1167.1,370.0 1170.0,362.9 1172.1,369.3 1174.3,367.9 1177.9,374.3 1180.7,374.3 1182.9,367.1 1187.1,373.6 1189.3,367.1 1193.6,367.9 1196.4,364.3 1199.3,367.9 1200.0,369.4 1204.7,375.7 1207.3,364.1 1208.9,361.5 1211.0,368.3 1213.1,365.2 1216.8,367.8 1218.9,371.0 1221.0,367.3 1225.2,376.7 1227.3,371.0 1229.4,372.5 1232.5,369.4 1235.7,370.4 1237.3,367.3 1240.4,372.0 1242.5,374.6 1244.1,385.1 1245.7,373.1 1247.8,386.2 1249.3,374.6 1251.4,370.4 1253.5,371.5 1255.6,364.1 1257.2,368.3 1259.8,367.3 1263.0,368.3 1265.1,370.4 1267.7,373.6 1270.3,366.8 1274.0,371.5 1276.1,364.7 1279.2,368.3 1281.9,373.1 1284.0,370.4 1286.1,368.3 1288.7,371.0 1290.3,370.4 1292.9,365.7 1295.0,368.3 1299.2,368.3"/>
</g>
<rect x="101.5" y="348.6" width="1198.0" height="83.6" fill="none" stroke="#222" stroke-width="1"/>
<line x1="101.4" y1="432.2" x2="101.4" y2="435.7" stroke="#222" stroke-width="0.8"/>
<text x="101.4" y="447.0" font-family="'Liberation Sans', sans-serif" font-size="10.4" text-anchor="middle" textLength="23.0" lengthAdjust="spacingAndGlyphs" fill="#111">3500</text>
<line x1="160.4" y1="432.2" x2="160.4" y2="435.7" stroke="#222" stroke-width="0.8"/>
<text x="160.4" y="447.0" font-family="'Liberation Sans', sans-serif" font-size="10.4" text-anchor="middle" textLength="23.0" lengthAdjust="spacingAndGlyphs" fill="#111">3600</text>
<line x1="219.4" y1="432.2" x2="219.4" y2="435.7" stroke="#222" stroke-width="0.8"/>
<text x="219.4" y="447.0" font-family="'Liberation Sans', sans-serif" font-size="10.4" text-anchor="middle" textLength="23.0" lengthAdjust="spacingAndGlyphs" fill="#111">3700</text>
<line x1="278.4" y1="432.2" x2="278.4" y2="435.7" stroke="#222" stroke-width="0.8"/>
<text x="278.4" y="447.0" font-family="'Liberation Sans', sans-serif" font-size="10.4" text-anchor="middle" textLength="23.0" lengthAdjust="spacingAndGlyphs" fill="#111">3800</text>
<line x1="337.4" y1="432.2" x2="337.4" y2="435.7" stroke="#222" stroke-width="0.8"/>
<text x="337.4" y="447.0" font-family="'Liberation Sans', sans-serif" font-size="10.4" text-anchor="middle" textLength="23.0" lengthAdjust="spacingAndGlyphs" fill="#111">3900</text>
<line x1="396.4" y1="432.2" x2="396.4" y2="435.7" stroke="#222" stroke-width="0.8"/>
<text x="396.4" y="447.0" font-family="'Liberation Sans', sans-serif" font-size="10.4" text-anchor="middle" textLength="23.0" lengthAdjust="spacingAndGlyphs" fill="#111">4000</text>
<line x1="455.4" y1="432.2" x2="455.4" y2="435.7" stroke="#222" stroke-width="0.8"/>
<text x="455.4" y="447.0" font-family="'Liberation Sans', sans-serif" font-size="10.4" text-anchor="middle" textLength="23.0" lengthAdjust="spacingAndGlyphs" fill="#111">4100</text>
<line x1="514.4" y1="432.2" x2="514.4" y2="435.7" stroke="#222" stroke-width="0.8"/>
<text x="514.4" y="447.0" font-family="'Liberation Sans', sans-serif" font-size="10.4" text-anchor="middle" textLength="23.0" lengthAdjust="spacingAndGlyphs" fill="#111">4200</text>
<line x1="573.4" y1="432.2" x2="573.4" y2="435.7" stroke="#222" stroke-width="0.8"/>
<text x="573.4" y="447.0" font-family="'Liberation Sans', sans-serif" font-size="10.4" text-anchor="middle" textLength="23.0" lengthAdjust="spacingAndGlyphs" fill="#111">4300</text>
<line x1="632.4" y1="432.2" x2="632.4" y2="435.7" stroke="#222" stroke-width="0.8"/>
<text x="632.4" y="447.0" font-family="'Liberation Sans', sans-serif" font-size="10.4" text-anchor="middle" textLength="23.0" lengthAdjust="spacingAndGlyphs" fill="#111">4400</text>
<line x1="691.4" y1="432.2" x2="691.4" y2="435.7" stroke="#222" stroke-width="0.8"/>
<text x="691.4" y="447.0" font-family="'Liberation Sans', sans-serif" font-size="10.4" text-anchor="middle" textLength="23.0" lengthAdjust="spacingAndGlyphs" fill="#111">4500</text>
<line x1="750.4" y1="432.2" x2="750.4" y2="435.7" stroke="#222" stroke-width="0.8"/>
<text x="750.4" y="447.0" font-family="'Liberation Sans', sans-serif" font-size="10.4" text-anchor="middle" textLength="23.0" lengthAdjust="spacingAndGlyphs" fill="#111">4600</text>
<line x1="809.4" y1="432.2" x2="809.4" y2="435.7" stroke="#222" stroke-width="0.8"/>
<text x="809.4" y="447.0" font-family="'Liberation Sans', sans-serif" font-size="10.4" text-anchor="middle" textLength="23.0" lengthAdjust="spacingAndGlyphs" fill="#111">4700</text>
<line x1="868.4" y1="432.2" x2="868.4" y2="435.7" stroke="#222" stroke-width="0.8"/>
<text x="868.4" y="447.0" font-family="'Liberation Sans', sans-serif" font-size="10.4" text-anchor="middle" textLength="23.0" lengthAdjust="spacingAndGlyphs" fill="#111">4800</text>
<line x1="927.4" y1="432.2" x2="927.4" y2="435.7" stroke="#222" stroke-width="0.8"/>
<text x="927.4" y="447.0" font-family="'Liberation Sans', sans-serif" font-size="10.4" text-anchor="middle" textLength="23.0" lengthAdjust="spacingAndGlyphs" fill="#111">4900</text>
<line x1="986.4" y1="432.2" x2="986.4" y2="435.7" stroke="#222" stroke-width="0.8"/>
<text x="986.4" y="447.0" font-family="'Liberation Sans', sans-serif" font-size="10.4" text-anchor="middle" textLength="23.0" lengthAdjust="spacingAndGlyphs" fill="#111">5000</text>
<line x1="1045.4" y1="432.2" x2="1045.4" y2="435.7" stroke="#222" stroke-width="0.8"/>
<text x="1045.4" y="447.0" font-family="'Liberation Sans', sans-serif" font-size="10.4" text-anchor="middle" textLength="23.0" lengthAdjust="spacingAndGlyphs" fill="#111">5100</text>
<line x1="1104.4" y1="432.2" x2="1104.4" y2="435.7" stroke="#222" stroke-width="0.8"/>
<text x="1104.4" y="447.0" font-family="'Liberation Sans', sans-serif" font-size="10.4" text-anchor="middle" textLength="23.0" lengthAdjust="spacingAndGlyphs" fill="#111">5200</text>
<line x1="1163.4" y1="432.2" x2="1163.4" y2="435.7" stroke="#222" stroke-width="0.8"/>
<text x="1163.4" y="447.0" font-family="'Liberation Sans', sans-serif" font-size="10.4" text-anchor="middle" textLength="23.0" lengthAdjust="spacingAndGlyphs" fill="#111">5300</text>
<line x1="1222.4" y1="432.2" x2="1222.4" y2="435.7" stroke="#222" stroke-width="0.8"/>
<text x="1222.4" y="447.0" font-family="'Liberation Sans', sans-serif" font-size="10.4" text-anchor="middle" textLength="23.0" lengthAdjust="spacingAndGlyphs" fill="#111">5400</text>
<line x1="1281.4" y1="432.2" x2="1281.4" y2="435.7" stroke="#222" stroke-width="0.8"/>
<text x="1281.4" y="447.0" font-family="'Liberation Sans', sans-serif" font-size="10.4" text-anchor="middle" textLength="23.0" lengthAdjust="spacingAndGlyphs" fill="#111">5500</text>
<line x1="98" y1="395.7" x2="101.5" y2="395.7" stroke="#222" stroke-width="0.8"/>
<text x="95.5" y="399.4" font-family="'Liberation Sans', sans-serif" font-size="10.4" text-anchor="end" textLength="12.0" lengthAdjust="spacingAndGlyphs" fill="#111">10</text>
<line x1="98" y1="356.5" x2="101.5" y2="356.5" stroke="#222" stroke-width="0.8"/>
<text x="95.5" y="360.2" font-family="'Liberation Sans', sans-serif" font-size="10.4" text-anchor="end" textLength="12.0" lengthAdjust="spacingAndGlyphs" fill="#111">20</text>
<text x="102.0" y="346.6" font-family="'Liberation Sans', sans-serif" font-size="10.2" fill="#111">e</text>
<text x="108.3" y="341.8" font-family="'Liberation Sans', sans-serif" font-size="7.0" textLength="12.0" lengthAdjust="spacingAndGlyphs" fill="#111">−17</text>
<text x="121.0" y="346.6" font-family="'Liberation Sans', sans-serif" font-size="10.2" textLength="19.0" lengthAdjust="spacingAndGlyphs" fill="#111">x2Å</text>
<text transform="translate(199.1,320.0) rotate(90)" font-family="'Liberation Sans', sans-serif" font-size="10.2" fill="#ff0000" stroke="#ff0000" stroke-width="0.25" textLength="13.0" lengthAdjust="spacingAndGlyphs">NV</text>
<path d="M198.2,348.3 Q198.2,346.4 200.2,346.4 L201.7,346.4 Q202.7,346.4 202.7,345.2 Q202.7,346.4 203.7,346.4 L205.2,346.4 Q207.2,346.4 207.2,348.3" fill="none" stroke="#ff0000" stroke-width="1"/>
<text transform="translate(238.5,324.9) rotate(90)" font-family="'Liberation Sans', sans-serif" font-size="10.2" fill="#ff0000" stroke="#ff0000" stroke-width="0.25" textLength="14.1" lengthAdjust="spacingAndGlyphs">SiII</text>
<path d="M237.6,348.3 Q237.6,346.4 239.6,346.4 L241.1,346.4 Q242.1,346.4 242.1,345.2 Q242.1,346.4 243.1,346.4 L244.6,346.4 Q246.6,346.4 246.6,348.3" fill="none" stroke="#ff0000" stroke-width="1"/>
<text transform="translate(279.7,320.8) rotate(90)" font-family="'Liberation Sans', sans-serif" font-size="10.2" fill="#8a3fe8" stroke="#8a3fe8" stroke-width="0.25" textLength="18.2" lengthAdjust="spacingAndGlyphs">HeII</text>
<path d="M278.8,348.3 Q278.8,346.4 280.8,346.4 L282.3,346.4 Q283.3,346.4 283.3,345.2 Q283.3,346.4 284.3,346.4 L285.8,346.4 Q287.8,346.4 287.8,348.3" fill="none" stroke="#8a3fe8" stroke-width="1"/>
<text transform="translate(472.9,321.0) rotate(90)" font-family="'Liberation Sans', sans-serif" font-size="10.2" fill="#ff0000" stroke="#ff0000" stroke-width="0.25" textLength="18.0" lengthAdjust="spacingAndGlyphs">SiIV</text>
<path d="M472.0,348.3 Q472.0,346.4 474.0,346.4 L475.5,346.4 Q476.5,346.4 476.5,345.2 Q476.5,346.4 477.5,346.4 L479.0,346.4 Q481.0,346.4 481.0,348.3" fill="none" stroke="#ff0000" stroke-width="1"/>
<text transform="translate(502.1,324.3) rotate(90)" font-family="'Liberation Sans', sans-serif" font-size="10.2" fill="#ffa500" stroke="#ffa500" stroke-width="0.25" textLength="14.7" lengthAdjust="spacingAndGlyphs">CIII</text>
<path d="M501.2,348.3 Q501.2,346.4 503.2,346.4 L504.7,346.4 Q505.7,346.4 505.7,345.2 Q505.7,346.4 506.7,346.4 L508.2,346.4 Q510.2,346.4 510.2,348.3" fill="none" stroke="#ffa500" stroke-width="1"/>
<text transform="translate(616.6,324.3) rotate(90)" font-family="'Liberation Sans', sans-serif" font-size="10.2" fill="#8b1a8b" stroke="#8b1a8b" stroke-width="0.25" textLength="11.7" lengthAdjust="spacingAndGlyphs">CII</text>
<path d="M615.7,348.3 Q615.7,346.4 617.7,346.4 L619.2,346.4 Q620.2,346.4 620.2,345.2 Q620.2,346.4 621.2,346.4 L622.7,346.4 Q624.7,346.4 624.7,348.3" fill="none" stroke="#8b1a8b" stroke-width="1"/>
<text transform="translate(646.9,324.3) rotate(90)" font-family="'Liberation Sans', sans-serif" font-size="10.2" fill="#8a3fe8" stroke="#8a3fe8" stroke-width="0.25" textLength="14.7" lengthAdjust="spacingAndGlyphs">CIII</text>
<path d="M646.0,348.3 Q646.0,346.4 648.0,346.4 L649.5,346.4 Q650.5,346.4 650.5,345.2 Q650.5,346.4 651.5,346.4 L653.0,346.4 Q655.0,346.4 655.0,348.3" fill="none" stroke="#8a3fe8" stroke-width="1"/>
<text transform="translate(737.4,320.2) rotate(90)" font-family="'Liberation Sans', sans-serif" font-size="10.2" fill="#ff0000" stroke="#ff0000" stroke-width="0.25" textLength="15.8" lengthAdjust="spacingAndGlyphs">CIV</text>
<path d="M736.5,348.3 Q736.5,346.4 738.5,346.4 L740.0,346.4 Q741.0,346.4 741.0,345.2 Q741.0,346.4 742.0,346.4 L743.5,346.4 Q745.5,346.4 745.5,348.3" fill="none" stroke="#ff0000" stroke-width="1"/>
<text transform="translate(859.6,323.2) rotate(90)" font-family="'Liberation Sans', sans-serif" font-size="10.2" fill="#ff44ff" stroke="#ff44ff" stroke-width="0.25" textLength="12.8" lengthAdjust="spacingAndGlyphs">OII</text>
<path d="M858.7,348.3 Q858.7,346.4 860.7,346.4 L862.2,346.4 Q863.2,346.4 863.2,345.2 Q863.2,346.4 864.2,346.4 L865.7,346.4 Q867.7,346.4 867.7,348.3" fill="none" stroke="#ff44ff" stroke-width="1"/>
<text transform="translate(895.9,321.0) rotate(90)" font-family="'Liberation Sans', sans-serif" font-size="10.2" fill="#ff0000" stroke="#ff0000" stroke-width="0.25" textLength="18.0" lengthAdjust="spacingAndGlyphs">HeII</text>
<path d="M895.0,348.3 Q895.0,346.4 897.0,346.4 L898.5,346.4 Q899.5,346.4 899.5,345.2 Q899.5,346.4 900.5,346.4 L902.0,346.4 Q904.0,346.4 904.0,348.3" fill="none" stroke="#ff0000" stroke-width="1"/>
<text transform="translate(1038.8,324.3) rotate(90)" font-family="'Liberation Sans', sans-serif" font-size="10.2" fill="#ffa500" stroke="#ffa500" stroke-width="0.25" textLength="11.4" lengthAdjust="spacingAndGlyphs">CII</text>
<path d="M1037.9,348.3 Q1037.9,346.4 1039.9,346.4 L1041.4,346.4 Q1042.4,346.4 1042.4,345.2 Q1042.4,346.4 1043.4,346.4 L1044.9,346.4 Q1046.9,346.4 1046.9,348.3" fill="none" stroke="#ffa500" stroke-width="1"/>
<text transform="translate(1143.8,319.6) rotate(90)" font-family="'Liberation Sans', sans-serif" font-size="10.2" fill="#8b1a8b" stroke="#8b1a8b" stroke-width="0.25" textLength="19.8" lengthAdjust="spacingAndGlyphs">MgII</text>
<path d="M1142.9,348.3 Q1142.9,346.4 1144.9,346.4 L1146.4,346.4 Q1147.4,346.4 1147.4,345.2 Q1147.4,346.4 1148.4,346.4 L1149.9,346.4 Q1151.9,346.4 1151.9,348.3" fill="none" stroke="#8b1a8b" stroke-width="1"/>
<text transform="translate(1215.2,324.3) rotate(90)" font-family="'Liberation Sans', sans-serif" font-size="10.2" fill="#8a3fe8" stroke="#8a3fe8" stroke-width="0.25" textLength="11.4" lengthAdjust="spacingAndGlyphs">CII</text>
<path d="M1214.3,348.3 Q1214.3,346.4 1216.3,346.4 L1217.8,346.4 Q1218.8,346.4 1218.8,345.2 Q1218.8,346.4 1219.8,346.4 L1221.3,346.4 Q1223.3,346.4 1223.3,348.3" fill="none" stroke="#8a3fe8" stroke-width="1"/>
<rect x="572.4" y="449.6" width="17.2" height="6.8" fill="#ff0000"/>
<text x="596.2" y="456.0" font-family="'Liberation Sans', sans-serif" font-size="7.6" fill="#222">Ly<tspan font-style="italic">α</tspan></text>
<rect x="626.0" y="449.6" width="17.2" height="6.8" fill="#8a2be2"/>
<text x="649.8" y="456.0" font-family="'Liberation Sans', sans-serif" font-size="7.6" fill="#222">CIV</text>
<rect x="681.4" y="449.6" width="17.2" height="6.8" fill="#800080"/>
<text x="705.2" y="456.0" font-family="'Liberation Sans', sans-serif" font-size="7.6" fill="#222">CIII</text>
<rect x="733.0" y="449.6" width="17.2" height="6.8" fill="#ff00ff"/>
<text x="756.8" y="456.0" font-family="'Liberation Sans', sans-serif" font-size="7.6" fill="#222">MgII</text>
<rect x="789.0" y="449.6" width="17.2" height="6.8" fill="#ffa500"/>
<text x="812.8" y="456.0" font-family="'Liberation Sans', sans-serif" font-size="7.6" fill="#222">HeII</text>
<text x="70.2" y="498.5" font-family="'Liberation Mono', monospace" font-size="14.0" textLength="523.5" lengthAdjust="spacingAndGlyphs" stroke="#000" stroke-width="0.22">HSC-DEX : Possible Matches = 1 (within +/- 3")  P(LAE)/P(OII): 1000</text>
<text x="600.0" y="493.2" font-family="'Liberation Sans', sans-serif" font-size="8.6" textLength="21.5" lengthAdjust="spacingAndGlyphs">1000</text>
<text x="600.0" y="502.1" font-family="'Liberation Sans', sans-serif" font-size="8.6" textLength="21.5" lengthAdjust="spacingAndGlyphs">1000</text>
<text x="631.0" y="498.5" font-family="'Liberation Mono', monospace" font-size="14.0" textLength="22.0" lengthAdjust="spacingAndGlyphs" stroke="#000" stroke-width="0.22">(r)</text>
<text x="143.8" y="525.3" font-family="'Liberation Sans', sans-serif" font-size="13.4" text-anchor="middle" textLength="92.0" lengthAdjust="spacingAndGlyphs" fill="#111">Fiber Positions</text>
<g clip-path="url(#clipFP)">
<rect x="69.9" y="532.9" width="148.5" height="147.0" fill="#d6d6d6" filter="url(#nzL)"/>
<circle cx="137.5" cy="572" r="36" fill="#000" opacity="0.22" filter="url(#blur3)"/>
<circle cx="137.5" cy="572" r="31" fill="#000" opacity="0.55" filter="url(#blur3)"/>
<circle cx="137.5" cy="571.5" r="26.5" fill="#000" filter="url(#blur1)"/>
<g fill="none" stroke="#555" stroke-width="1.0"><circle cx="119.0" cy="557.1" r="12.1"/><circle cx="143.3" cy="557.1" r="12.1"/><circle cx="166.9" cy="557.1" r="12.1"/><circle cx="107.1" cy="577.8" r="12.1"/><circle cx="131.0" cy="577.8" r="12.1"/><circle cx="155.4" cy="577.8" r="12.1"/><circle cx="179.6" cy="577.8" r="12.1"/><circle cx="95.9" cy="601.0" r="12.1"/><circle cx="167.7" cy="599.4" r="12.1"/><circle cx="192.4" cy="598.6" r="12.1"/><circle cx="107.1" cy="621.7" r="12.1"/><circle cx="180.4" cy="620.1" r="12.1"/><circle cx="120.6" cy="641.6" r="12.1"/><circle cx="144.2" cy="641.6" r="12.1"/><circle cx="168.5" cy="641.6" r="12.1"/><circle cx="158.1" cy="661.6" r="12.1"/></g>
</g>
<circle cx="119.8" cy="599.7" r="12.3" fill="none" stroke="#ffa500" stroke-width="1.5"/>
<circle cx="143.3" cy="599.4" r="12.3" fill="none" stroke="#00ee00" stroke-width="1.5"/>
<circle cx="132.3" cy="621.2" r="12.3" fill="none" stroke="#0000ff" stroke-width="1.5"/>
<circle cx="156.5" cy="620.1" r="12.3" fill="none" stroke="#ff0000" stroke-width="1.5"/>
<rect x="94.5" y="557.5" width="99.3" height="98.3" fill="none" stroke="#ff0000" stroke-width="1.6"/>
<path d="M140.5,606.6 H147.9 M144.2,602.9 V610.3" stroke="#ff0000" stroke-width="1.2"/>
<text x="144.2" y="546.5" font-family="'Liberation Sans', sans-serif" font-size="10.5" text-anchor="middle" fill="#ff0000">N</text>
<text x="80.2" y="610.4" font-family="'Liberation Sans', sans-serif" font-size="10.5" text-anchor="middle" fill="#ff0000">E</text>
<rect x="69.9" y="532.9" width="148.5" height="147.0" fill="none" stroke="#222" stroke-width="1"/>
<line x1="78.4" y1="679.9" x2="78.4" y2="683.4" stroke="#222" stroke-width="0.8"/>
<text x="75.1" y="694.7" font-family="'Liberation Sans', sans-serif" font-size="11.8" text-anchor="middle" fill="#111">−4</text>
<line x1="66.4" y1="672.1" x2="69.9" y2="672.1" stroke="#222" stroke-width="0.8"/>
<text x="64.9" y="676.3" font-family="'Liberation Sans', sans-serif" font-size="11.8" text-anchor="end" fill="#111">−4</text>
<line x1="111.1" y1="679.9" x2="111.1" y2="683.4" stroke="#222" stroke-width="0.8"/>
<text x="107.8" y="694.7" font-family="'Liberation Sans', sans-serif" font-size="11.8" text-anchor="middle" fill="#111">−2</text>
<line x1="66.4" y1="639.4" x2="69.9" y2="639.4" stroke="#222" stroke-width="0.8"/>
<text x="64.9" y="643.6" font-family="'Liberation Sans', sans-serif" font-size="11.8" text-anchor="end" fill="#111">−2</text>
<line x1="143.8" y1="679.9" x2="143.8" y2="683.4" stroke="#222" stroke-width="0.8"/>
<text x="143.8" y="694.7" font-family="'Liberation Sans', sans-serif" font-size="11.8" text-anchor="middle" fill="#111">0</text>
<line x1="66.4" y1="606.7" x2="69.9" y2="606.7" stroke="#222" stroke-width="0.8"/>
<text x="64.9" y="610.9" font-family="'Liberation Sans', sans-serif" font-size="11.8" text-anchor="end" fill="#111">0</text>
<line x1="176.5" y1="679.9" x2="176.5" y2="683.4" stroke="#222" stroke-width="0.8"/>
<text x="176.5" y="694.7" font-family="'Liberation Sans', sans-serif" font-size="11.8" text-anchor="middle" fill="#111">2</text>
<line x1="66.4" y1="574.0" x2="69.9" y2="574.0" stroke="#222" stroke-width="0.8"/>
<text x="64.9" y="578.2" font-family="'Liberation Sans', sans-serif" font-size="11.8" text-anchor="end" fill="#111">2</text>
<line x1="209.2" y1="679.9" x2="209.2" y2="683.4" stroke="#222" stroke-width="0.8"/>
<text x="209.2" y="694.7" font-family="'Liberation Sans', sans-serif" font-size="11.8" text-anchor="middle" fill="#111">4</text>
<line x1="66.4" y1="541.3" x2="69.9" y2="541.3" stroke="#222" stroke-width="0.8"/>
<text x="64.9" y="545.5" font-family="'Liberation Sans', sans-serif" font-size="11.8" text-anchor="end" fill="#111">4</text>
<text x="143.8" y="706.7" font-family="'Liberation Sans', sans-serif" font-size="11.6" text-anchor="middle" fill="#111">arcsecs</text>
<text x="329.3" y="525.3" font-family="'Liberation Sans', sans-serif" font-size="13.4" text-anchor="middle" textLength="82.0" lengthAdjust="spacingAndGlyphs" fill="#111">Lineflux Map</text>
<g clip-path="url(#clipLF)">
<rect x="255.3" y="533.2" width="148.4" height="147.1" fill="#3b528b"/>
<g filter="url(#blur2)"><rect x="249.1" y="527.0" width="6.48" height="6.48" fill="#228a8d"/><rect x="255.3" y="527.0" width="6.48" height="6.48" fill="#228a8d"/><rect x="261.5" y="527.0" width="6.48" height="6.48" fill="#24848d"/><rect x="267.7" y="527.0" width="6.48" height="6.48" fill="#2d6e8e"/><rect x="273.9" y="527.0" width="6.48" height="6.48" fill="#38568b"/><rect x="280.0" y="527.0" width="6.48" height="6.48" fill="#404387"/><rect x="286.2" y="527.0" width="6.48" height="6.48" fill="#462f7c"/><rect x="292.4" y="527.0" width="6.48" height="6.48" fill="#481e70"/><rect x="298.6" y="527.0" width="6.48" height="6.48" fill="#471265"/><rect x="304.8" y="527.0" width="6.48" height="6.48" fill="#46095c"/><rect x="311.0" y="527.0" width="6.48" height="6.48" fill="#481d6f"/><rect x="317.1" y="527.0" width="6.48" height="6.48" fill="#462f7c"/><rect x="323.3" y="527.0" width="6.48" height="6.48" fill="#433c84"/><rect x="329.5" y="527.0" width="6.48" height="6.48" fill="#3e4989"/><rect x="335.7" y="527.0" width="6.48" height="6.48" fill="#3d4b89"/><rect x="341.9" y="527.0" width="6.48" height="6.48" fill="#453681"/><rect x="348.1" y="527.0" width="6.48" height="6.48" fill="#482071"/><rect x="354.2" y="527.0" width="6.48" height="6.48" fill="#471669"/><rect x="360.4" y="527.0" width="6.48" height="6.48" fill="#470f62"/><rect x="366.6" y="527.0" width="6.48" height="6.48" fill="#472676"/><rect x="372.8" y="527.0" width="6.48" height="6.48" fill="#39548b"/><rect x="379.0" y="527.0" width="6.48" height="6.48" fill="#29788e"/><rect x="385.1" y="527.0" width="6.48" height="6.48" fill="#277d8e"/><rect x="391.3" y="527.0" width="6.48" height="6.48" fill="#25828e"/><rect x="397.5" y="527.0" width="6.48" height="6.48" fill="#24848d"/><rect x="403.7" y="527.0" width="6.48" height="6.48" fill="#24848d"/><rect x="249.1" y="533.2" width="6.48" height="6.48" fill="#228a8d"/><rect x="255.3" y="533.2" width="6.48" height="6.48" fill="#228a8d"/><rect x="261.5" y="533.2" width="6.48" height="6.48" fill="#24848d"/><rect x="267.7" y="533.2" width="6.48" height="6.48" fill="#2d6e8e"/><rect x="273.9" y="533.2" width="6.48" height="6.48" fill="#38568b"/><rect x="280.0" y="533.2" width="6.48" height="6.48" fill="#404387"/><rect x="286.2" y="533.2" width="6.48" height="6.48" fill="#462f7c"/><rect x="292.4" y="533.2" width="6.48" height="6.48" fill="#481e70"/><rect x="298.6" y="533.2" width="6.48" height="6.48" fill="#471265"/><rect x="304.8" y="533.2" width="6.48" height="6.48" fill="#46095c"/><rect x="311.0" y="533.2" width="6.48" height="6.48" fill="#481d6f"/><rect x="317.1" y="533.2" width="6.48" height="6.48" fill="#462f7c"/><rect x="323.3" y="533.2" width="6.48" height="6.48" fill="#433c84"/><rect x="329.5" y="533.2" width="6.48" height="6.48" fill="#3e4989"/><rect x="335.7" y="533.2" width="6.48" height="6.48" fill="#3d4b89"/><rect x="341.9" y="533.2" width="6.48" height="6.48" fill="#453681"/><rect x="348.1" y="533.2" width="6.48" height="6.48" fill="#482071"/><rect x="354.2" y="533.2" width="6.48" height="6.48" fill="#471669"/><rect x="360.4" y="533.2" width="6.48" height="6.48" fill="#470f62"/><rect x="366.6" y="533.2" width="6.48" height="6.48" fill="#472676"/><rect x="372.8" y="533.2" width="6.48" height="6.48" fill="#39548b"/><rect x="379.0" y="533.2" width="6.48" height="6.48" fill="#29788e"/><rect x="385.1" y="533.2" width="6.48" height="6.48" fill="#277d8e"/><rect x="391.3" y="533.2" width="6.48" height="6.48" fill="#25828e"/><rect x="397.5" y="533.2" width="6.48" height="6.48" fill="#24848d"/><rect x="403.7" y="533.2" width="6.48" height="6.48" fill="#24848d"/><rect x="249.1" y="539.4" width="6.48" height="6.48" fill="#24868d"/><rect x="255.3" y="539.4" width="6.48" height="6.48" fill="#24868d"/><rect x="261.5" y="539.4" width="6.48" height="6.48" fill="#267f8e"/><rect x="267.7" y="539.4" width="6.48" height="6.48" fill="#2e6b8e"/><rect x="273.9" y="539.4" width="6.48" height="6.48" fill="#38568b"/><rect x="280.0" y="539.4" width="6.48" height="6.48" fill="#404387"/><rect x="286.2" y="539.4" width="6.48" height="6.48" fill="#462f7c"/><rect x="292.4" y="539.4" width="6.48" height="6.48" fill="#481e70"/><rect x="298.6" y="539.4" width="6.48" height="6.48" fill="#471466"/><rect x="304.8" y="539.4" width="6.48" height="6.48" fill="#46095c"/><rect x="311.0" y="539.4" width="6.48" height="6.48" fill="#481a6c"/><rect x="317.1" y="539.4" width="6.48" height="6.48" fill="#472a79"/><rect x="323.3" y="539.4" width="6.48" height="6.48" fill="#453681"/><rect x="329.5" y="539.4" width="6.48" height="6.48" fill="#414286"/><rect x="335.7" y="539.4" width="6.48" height="6.48" fill="#404387"/><rect x="341.9" y="539.4" width="6.48" height="6.48" fill="#46317e"/><rect x="348.1" y="539.4" width="6.48" height="6.48" fill="#481d6f"/><rect x="354.2" y="539.4" width="6.48" height="6.48" fill="#471669"/><rect x="360.4" y="539.4" width="6.48" height="6.48" fill="#471163"/><rect x="366.6" y="539.4" width="6.48" height="6.48" fill="#472777"/><rect x="372.8" y="539.4" width="6.48" height="6.48" fill="#39558b"/><rect x="379.0" y="539.4" width="6.48" height="6.48" fill="#29788e"/><rect x="385.1" y="539.4" width="6.48" height="6.48" fill="#287a8e"/><rect x="391.3" y="539.4" width="6.48" height="6.48" fill="#277e8e"/><rect x="397.5" y="539.4" width="6.48" height="6.48" fill="#267f8e"/><rect x="403.7" y="539.4" width="6.48" height="6.48" fill="#267f8e"/><rect x="249.1" y="545.6" width="6.48" height="6.48" fill="#2b738e"/><rect x="255.3" y="545.6" width="6.48" height="6.48" fill="#2b738e"/><rect x="261.5" y="545.6" width="6.48" height="6.48" fill="#2c708e"/><rect x="267.7" y="545.6" width="6.48" height="6.48" fill="#32628d"/><rect x="273.9" y="545.6" width="6.48" height="6.48" fill="#39558b"/><rect x="280.0" y="545.6" width="6.48" height="6.48" fill="#404487"/><rect x="286.2" y="545.6" width="6.48" height="6.48" fill="#46317e"/><rect x="292.4" y="545.6" width="6.48" height="6.48" fill="#482172"/><rect x="298.6" y="545.6" width="6.48" height="6.48" fill="#471466"/><rect x="304.8" y="545.6" width="6.48" height="6.48" fill="#45085b"/><rect x="311.0" y="545.6" width="6.48" height="6.48" fill="#471265"/><rect x="317.1" y="545.6" width="6.48" height="6.48" fill="#481a6c"/><rect x="323.3" y="545.6" width="6.48" height="6.48" fill="#482172"/><rect x="329.5" y="545.6" width="6.48" height="6.48" fill="#472777"/><rect x="335.7" y="545.6" width="6.48" height="6.48" fill="#472878"/><rect x="341.9" y="545.6" width="6.48" height="6.48" fill="#481e70"/><rect x="348.1" y="545.6" width="6.48" height="6.48" fill="#471265"/><rect x="354.2" y="545.6" width="6.48" height="6.48" fill="#471466"/><rect x="360.4" y="545.6" width="6.48" height="6.48" fill="#471567"/><rect x="366.6" y="545.6" width="6.48" height="6.48" fill="#472c7b"/><rect x="372.8" y="545.6" width="6.48" height="6.48" fill="#39558b"/><rect x="379.0" y="545.6" width="6.48" height="6.48" fill="#2a758e"/><rect x="385.1" y="545.6" width="6.48" height="6.48" fill="#2b738e"/><rect x="391.3" y="545.6" width="6.48" height="6.48" fill="#2c718e"/><rect x="397.5" y="545.6" width="6.48" height="6.48" fill="#2c708e"/><rect x="403.7" y="545.6" width="6.48" height="6.48" fill="#2c708e"/><rect x="249.1" y="551.8" width="6.48" height="6.48" fill="#33608d"/><rect x="255.3" y="551.8" width="6.48" height="6.48" fill="#33608d"/><rect x="261.5" y="551.8" width="6.48" height="6.48" fill="#345f8d"/><rect x="267.7" y="551.8" width="6.48" height="6.48" fill="#365a8c"/><rect x="273.9" y="551.8" width="6.48" height="6.48" fill="#39558b"/><rect x="280.0" y="551.8" width="6.48" height="6.48" fill="#3f4587"/><rect x="286.2" y="551.8" width="6.48" height="6.48" fill="#45347f"/><rect x="292.4" y="551.8" width="6.48" height="6.48" fill="#482374"/><rect x="298.6" y="551.8" width="6.48" height="6.48" fill="#471567"/><rect x="304.8" y="551.8" width="6.48" height="6.48" fill="#45085b"/><rect x="311.0" y="551.8" width="6.48" height="6.48" fill="#45085b"/><rect x="317.1" y="551.8" width="6.48" height="6.48" fill="#46095c"/><rect x="323.3" y="551.8" width="6.48" height="6.48" fill="#46095c"/><rect x="329.5" y="551.8" width="6.48" height="6.48" fill="#460b5e"/><rect x="335.7" y="551.8" width="6.48" height="6.48" fill="#460b5e"/><rect x="341.9" y="551.8" width="6.48" height="6.48" fill="#46095c"/><rect x="348.1" y="551.8" width="6.48" height="6.48" fill="#45085b"/><rect x="354.2" y="551.8" width="6.48" height="6.48" fill="#471163"/><rect x="360.4" y="551.8" width="6.48" height="6.48" fill="#47186a"/><rect x="366.6" y="551.8" width="6.48" height="6.48" fill="#46317e"/><rect x="372.8" y="551.8" width="6.48" height="6.48" fill="#38568b"/><rect x="379.0" y="551.8" width="6.48" height="6.48" fill="#2c728e"/><rect x="385.1" y="551.8" width="6.48" height="6.48" fill="#2f6a8d"/><rect x="391.3" y="551.8" width="6.48" height="6.48" fill="#32628d"/><rect x="397.5" y="551.8" width="6.48" height="6.48" fill="#33608d"/><rect x="403.7" y="551.8" width="6.48" height="6.48" fill="#33608d"/><rect x="249.1" y="557.9" width="6.48" height="6.48" fill="#365a8c"/><rect x="255.3" y="557.9" width="6.48" height="6.48" fill="#365a8c"/><rect x="261.5" y="557.9" width="6.48" height="6.48" fill="#37598c"/><rect x="267.7" y="557.9" width="6.48" height="6.48" fill="#39558b"/><rect x="273.9" y="557.9" width="6.48" height="6.48" fill="#3b518a"/><rect x="280.0" y="557.9" width="6.48" height="6.48" fill="#3e4989"/><rect x="286.2" y="557.9" width="6.48" height="6.48" fill="#414186"/><rect x="292.4" y="557.9" width="6.48" height="6.48" fill="#453580"/><rect x="298.6" y="557.9" width="6.48" height="6.48" fill="#482374"/><rect x="304.8" y="557.9" width="6.48" height="6.48" fill="#471265"/><rect x="311.0" y="557.9" width="6.48" height="6.48" fill="#460e61"/><rect x="317.1" y="557.9" width="6.48" height="6.48" fill="#46095c"/><rect x="323.3" y="557.9" width="6.48" height="6.48" fill="#45065a"/><rect x="329.5" y="557.9" width="6.48" height="6.48" fill="#45065a"/><rect x="335.7" y="557.9" width="6.48" height="6.48" fill="#45065a"/><rect x="341.9" y="557.9" width="6.48" height="6.48" fill="#45065a"/><rect x="348.1" y="557.9" width="6.48" height="6.48" fill="#45065a"/><rect x="354.2" y="557.9" width="6.48" height="6.48" fill="#460c5f"/><rect x="360.4" y="557.9" width="6.48" height="6.48" fill="#471466"/><rect x="366.6" y="557.9" width="6.48" height="6.48" fill="#472878"/><rect x="372.8" y="557.9" width="6.48" height="6.48" fill="#3d4a89"/><rect x="379.0" y="557.9" width="6.48" height="6.48" fill="#32638d"/><rect x="385.1" y="557.9" width="6.48" height="6.48" fill="#365a8c"/><rect x="391.3" y="557.9" width="6.48" height="6.48" fill="#3a528b"/><rect x="397.5" y="557.9" width="6.48" height="6.48" fill="#3b508a"/><rect x="403.7" y="557.9" width="6.48" height="6.48" fill="#3b508a"/><rect x="249.1" y="564.1" width="6.48" height="6.48" fill="#38568b"/><rect x="255.3" y="564.1" width="6.48" height="6.48" fill="#38568b"/><rect x="261.5" y="564.1" width="6.48" height="6.48" fill="#39558b"/><rect x="267.7" y="564.1" width="6.48" height="6.48" fill="#3b518a"/><rect x="273.9" y="564.1" width="6.48" height="6.48" fill="#3d4b89"/><rect x="280.0" y="564.1" width="6.48" height="6.48" fill="#3c4d8a"/><rect x="286.2" y="564.1" width="6.48" height="6.48" fill="#3b508a"/><rect x="292.4" y="564.1" width="6.48" height="6.48" fill="#3f4788"/><rect x="298.6" y="564.1" width="6.48" height="6.48" fill="#45327f"/><rect x="304.8" y="564.1" width="6.48" height="6.48" fill="#481d6f"/><rect x="311.0" y="564.1" width="6.48" height="6.48" fill="#471466"/><rect x="317.1" y="564.1" width="6.48" height="6.48" fill="#460b5e"/><rect x="323.3" y="564.1" width="6.48" height="6.48" fill="#45065a"/><rect x="329.5" y="564.1" width="6.48" height="6.48" fill="#450558"/><rect x="335.7" y="564.1" width="6.48" height="6.48" fill="#450558"/><rect x="341.9" y="564.1" width="6.48" height="6.48" fill="#450558"/><rect x="348.1" y="564.1" width="6.48" height="6.48" fill="#450558"/><rect x="354.2" y="564.1" width="6.48" height="6.48" fill="#45085b"/><rect x="360.4" y="564.1" width="6.48" height="6.48" fill="#460c5f"/><rect x="366.6" y="564.1" width="6.48" height="6.48" fill="#481e70"/><rect x="372.8" y="564.1" width="6.48" height="6.48" fill="#433b83"/><rect x="379.0" y="564.1" width="6.48" height="6.48" fill="#3a528b"/><rect x="385.1" y="564.1" width="6.48" height="6.48" fill="#3e4989"/><rect x="391.3" y="564.1" width="6.48" height="6.48" fill="#424085"/><rect x="397.5" y="564.1" width="6.48" height="6.48" fill="#423d84"/><rect x="403.7" y="564.1" width="6.48" height="6.48" fill="#423d84"/><rect x="249.1" y="570.3" width="6.48" height="6.48" fill="#3a538b"/><rect x="255.3" y="570.3" width="6.48" height="6.48" fill="#3a538b"/><rect x="261.5" y="570.3" width="6.48" height="6.48" fill="#3a528b"/><rect x="267.7" y="570.3" width="6.48" height="6.48" fill="#3d4c89"/><rect x="273.9" y="570.3" width="6.48" height="6.48" fill="#3f4788"/><rect x="280.0" y="570.3" width="6.48" height="6.48" fill="#3b518a"/><rect x="286.2" y="570.3" width="6.48" height="6.48" fill="#365b8c"/><rect x="292.4" y="570.3" width="6.48" height="6.48" fill="#38578c"/><rect x="298.6" y="570.3" width="6.48" height="6.48" fill="#3f4587"/><rect x="304.8" y="570.3" width="6.48" height="6.48" fill="#45327f"/><rect x="311.0" y="570.3" width="6.48" height="6.48" fill="#472676"/><rect x="317.1" y="570.3" width="6.48" height="6.48" fill="#47186a"/><rect x="323.3" y="570.3" width="6.48" height="6.48" fill="#470f62"/><rect x="329.5" y="570.3" width="6.48" height="6.48" fill="#46095c"/><rect x="335.7" y="570.3" width="6.48" height="6.48" fill="#450558"/><rect x="341.9" y="570.3" width="6.48" height="6.48" fill="#450558"/><rect x="348.1" y="570.3" width="6.48" height="6.48" fill="#45065a"/><rect x="354.2" y="570.3" width="6.48" height="6.48" fill="#460e61"/><rect x="360.4" y="570.3" width="6.48" height="6.48" fill="#471567"/><rect x="366.6" y="570.3" width="6.48" height="6.48" fill="#482172"/><rect x="372.8" y="570.3" width="6.48" height="6.48" fill="#46317e"/><rect x="379.0" y="570.3" width="6.48" height="6.48" fill="#423e85"/><rect x="385.1" y="570.3" width="6.48" height="6.48" fill="#453681"/><rect x="391.3" y="570.3" width="6.48" height="6.48" fill="#462d7c"/><rect x="397.5" y="570.3" width="6.48" height="6.48" fill="#472b7a"/><rect x="403.7" y="570.3" width="6.48" height="6.48" fill="#472b7a"/><rect x="249.1" y="576.5" width="6.48" height="6.48" fill="#3b518a"/><rect x="255.3" y="576.5" width="6.48" height="6.48" fill="#3b518a"/><rect x="261.5" y="576.5" width="6.48" height="6.48" fill="#3c4e8a"/><rect x="267.7" y="576.5" width="6.48" height="6.48" fill="#3e4989"/><rect x="273.9" y="576.5" width="6.48" height="6.48" fill="#414286"/><rect x="280.0" y="576.5" width="6.48" height="6.48" fill="#3a538b"/><rect x="286.2" y="576.5" width="6.48" height="6.48" fill="#31648d"/><rect x="292.4" y="576.5" width="6.48" height="6.48" fill="#30678d"/><rect x="298.6" y="576.5" width="6.48" height="6.48" fill="#355d8c"/><rect x="304.8" y="576.5" width="6.48" height="6.48" fill="#3a528b"/><rect x="311.0" y="576.5" width="6.48" height="6.48" fill="#414186"/><rect x="317.1" y="576.5" width="6.48" height="6.48" fill="#46307d"/><rect x="323.3" y="576.5" width="6.48" height="6.48" fill="#482071"/><rect x="329.5" y="576.5" width="6.48" height="6.48" fill="#471163"/><rect x="335.7" y="576.5" width="6.48" height="6.48" fill="#45065a"/><rect x="341.9" y="576.5" width="6.48" height="6.48" fill="#46095c"/><rect x="348.1" y="576.5" width="6.48" height="6.48" fill="#460c5f"/><rect x="354.2" y="576.5" width="6.48" height="6.48" fill="#481a6c"/><rect x="360.4" y="576.5" width="6.48" height="6.48" fill="#472878"/><rect x="366.6" y="576.5" width="6.48" height="6.48" fill="#462f7c"/><rect x="372.8" y="576.5" width="6.48" height="6.48" fill="#472c7b"/><rect x="379.0" y="576.5" width="6.48" height="6.48" fill="#472a79"/><rect x="385.1" y="576.5" width="6.48" height="6.48" fill="#482374"/><rect x="391.3" y="576.5" width="6.48" height="6.48" fill="#481d6f"/><rect x="397.5" y="576.5" width="6.48" height="6.48" fill="#481c6e"/><rect x="403.7" y="576.5" width="6.48" height="6.48" fill="#481c6e"/><rect x="249.1" y="582.7" width="6.48" height="6.48" fill="#3c4d8a"/><rect x="255.3" y="582.7" width="6.48" height="6.48" fill="#3c4d8a"/><rect x="261.5" y="582.7" width="6.48" height="6.48" fill="#3d4b89"/><rect x="267.7" y="582.7" width="6.48" height="6.48" fill="#404387"/><rect x="273.9" y="582.7" width="6.48" height="6.48" fill="#433c84"/><rect x="280.0" y="582.7" width="6.48" height="6.48" fill="#3a538b"/><rect x="286.2" y="582.7" width="6.48" height="6.48" fill="#2e6b8e"/><rect x="292.4" y="582.7" width="6.48" height="6.48" fill="#2b748e"/><rect x="298.6" y="582.7" width="6.48" height="6.48" fill="#2c708e"/><rect x="304.8" y="582.7" width="6.48" height="6.48" fill="#2e6b8e"/><rect x="311.0" y="582.7" width="6.48" height="6.48" fill="#365a8c"/><rect x="317.1" y="582.7" width="6.48" height="6.48" fill="#3e4888"/><rect x="323.3" y="582.7" width="6.48" height="6.48" fill="#45327f"/><rect x="329.5" y="582.7" width="6.48" height="6.48" fill="#481d6f"/><rect x="335.7" y="582.7" width="6.48" height="6.48" fill="#460c5f"/><rect x="341.9" y="582.7" width="6.48" height="6.48" fill="#471163"/><rect x="348.1" y="582.7" width="6.48" height="6.48" fill="#471567"/><rect x="354.2" y="582.7" width="6.48" height="6.48" fill="#472777"/><rect x="360.4" y="582.7" width="6.48" height="6.48" fill="#433a83"/><rect x="366.6" y="582.7" width="6.48" height="6.48" fill="#433a83"/><rect x="372.8" y="582.7" width="6.48" height="6.48" fill="#472777"/><rect x="379.0" y="582.7" width="6.48" height="6.48" fill="#471567"/><rect x="385.1" y="582.7" width="6.48" height="6.48" fill="#471163"/><rect x="391.3" y="582.7" width="6.48" height="6.48" fill="#460c5f"/><rect x="397.5" y="582.7" width="6.48" height="6.48" fill="#460b5e"/><rect x="403.7" y="582.7" width="6.48" height="6.48" fill="#460b5e"/><rect x="249.1" y="588.9" width="6.48" height="6.48" fill="#423e85"/><rect x="255.3" y="588.9" width="6.48" height="6.48" fill="#423e85"/><rect x="261.5" y="588.9" width="6.48" height="6.48" fill="#433b83"/><rect x="267.7" y="588.9" width="6.48" height="6.48" fill="#46317e"/><rect x="273.9" y="588.9" width="6.48" height="6.48" fill="#472777"/><rect x="280.0" y="588.9" width="6.48" height="6.48" fill="#414286"/><rect x="286.2" y="588.9" width="6.48" height="6.48" fill="#355d8c"/><rect x="292.4" y="588.9" width="6.48" height="6.48" fill="#2e6d8e"/><rect x="298.6" y="588.9" width="6.48" height="6.48" fill="#2b738e"/><rect x="304.8" y="588.9" width="6.48" height="6.48" fill="#29788e"/><rect x="311.0" y="588.9" width="6.48" height="6.48" fill="#2b748e"/><rect x="317.1" y="588.9" width="6.48" height="6.48" fill="#2c708e"/><rect x="323.3" y="588.9" width="6.48" height="6.48" fill="#355d8c"/><rect x="329.5" y="588.9" width="6.48" height="6.48" fill="#414186"/><rect x="335.7" y="588.9" width="6.48" height="6.48" fill="#472c7b"/><rect x="341.9" y="588.9" width="6.48" height="6.48" fill="#462f7c"/><rect x="348.1" y="588.9" width="6.48" height="6.48" fill="#46317e"/><rect x="354.2" y="588.9" width="6.48" height="6.48" fill="#453580"/><rect x="360.4" y="588.9" width="6.48" height="6.48" fill="#433a83"/><rect x="366.6" y="588.9" width="6.48" height="6.48" fill="#45347f"/><rect x="372.8" y="588.9" width="6.48" height="6.48" fill="#482172"/><rect x="379.0" y="588.9" width="6.48" height="6.48" fill="#470f62"/><rect x="385.1" y="588.9" width="6.48" height="6.48" fill="#460c5f"/><rect x="391.3" y="588.9" width="6.48" height="6.48" fill="#460b5e"/><rect x="397.5" y="588.9" width="6.48" height="6.48" fill="#46095c"/><rect x="403.7" y="588.9" width="6.48" height="6.48" fill="#46095c"/><rect x="249.1" y="595.0" width="6.48" height="6.48" fill="#462f7c"/><rect x="255.3" y="595.0" width="6.48" height="6.48" fill="#462f7c"/><rect x="261.5" y="595.0" width="6.48" height="6.48" fill="#472b7a"/><rect x="267.7" y="595.0" width="6.48" height="6.48" fill="#481e70"/><rect x="273.9" y="595.0" width="6.48" height="6.48" fill="#471163"/><rect x="280.0" y="595.0" width="6.48" height="6.48" fill="#462f7c"/><rect x="286.2" y="595.0" width="6.48" height="6.48" fill="#3c4e8a"/><rect x="292.4" y="595.0" width="6.48" height="6.48" fill="#31658d"/><rect x="298.6" y="595.0" width="6.48" height="6.48" fill="#2a758e"/><rect x="304.8" y="595.0" width="6.48" height="6.48" fill="#24848d"/><rect x="311.0" y="595.0" width="6.48" height="6.48" fill="#218c8d"/><rect x="317.1" y="595.0" width="6.48" height="6.48" fill="#1f958b"/><rect x="323.3" y="595.0" width="6.48" height="6.48" fill="#26818e"/><rect x="329.5" y="595.0" width="6.48" height="6.48" fill="#33618d"/><rect x="335.7" y="595.0" width="6.48" height="6.48" fill="#3e4989"/><rect x="341.9" y="595.0" width="6.48" height="6.48" fill="#3d4a89"/><rect x="348.1" y="595.0" width="6.48" height="6.48" fill="#3d4a89"/><rect x="354.2" y="595.0" width="6.48" height="6.48" fill="#404387"/><rect x="360.4" y="595.0" width="6.48" height="6.48" fill="#433a83"/><rect x="366.6" y="595.0" width="6.48" height="6.48" fill="#462d7c"/><rect x="372.8" y="595.0" width="6.48" height="6.48" fill="#481c6e"/><rect x="379.0" y="595.0" width="6.48" height="6.48" fill="#46095c"/><rect x="385.1" y="595.0" width="6.48" height="6.48" fill="#45085b"/><rect x="391.3" y="595.0" width="6.48" height="6.48" fill="#45085b"/><rect x="397.5" y="595.0" width="6.48" height="6.48" fill="#45085b"/><rect x="403.7" y="595.0" width="6.48" height="6.48" fill="#45085b"/><rect x="249.1" y="601.2" width="6.48" height="6.48" fill="#46317e"/><rect x="255.3" y="601.2" width="6.48" height="6.48" fill="#46317e"/><rect x="261.5" y="601.2" width="6.48" height="6.48" fill="#472c7b"/><rect x="267.7" y="601.2" width="6.48" height="6.48" fill="#481c6e"/><rect x="273.9" y="601.2" width="6.48" height="6.48" fill="#46095c"/><rect x="280.0" y="601.2" width="6.48" height="6.48" fill="#482374"/><rect x="286.2" y="601.2" width="6.48" height="6.48" fill="#423e85"/><rect x="292.4" y="601.2" width="6.48" height="6.48" fill="#39558b"/><rect x="298.6" y="601.2" width="6.48" height="6.48" fill="#2f698d"/><rect x="304.8" y="601.2" width="6.48" height="6.48" fill="#287a8e"/><rect x="311.0" y="601.2" width="6.48" height="6.48" fill="#22898d"/><rect x="317.1" y="601.2" width="6.48" height="6.48" fill="#1e988a"/><rect x="323.3" y="601.2" width="6.48" height="6.48" fill="#22898d"/><rect x="329.5" y="601.2" width="6.48" height="6.48" fill="#2c708e"/><rect x="335.7" y="601.2" width="6.48" height="6.48" fill="#365b8c"/><rect x="341.9" y="601.2" width="6.48" height="6.48" fill="#39558b"/><rect x="348.1" y="601.2" width="6.48" height="6.48" fill="#3c4d8a"/><rect x="354.2" y="601.2" width="6.48" height="6.48" fill="#424085"/><rect x="360.4" y="601.2" width="6.48" height="6.48" fill="#46317e"/><rect x="366.6" y="601.2" width="6.48" height="6.48" fill="#482273"/><rect x="372.8" y="601.2" width="6.48" height="6.48" fill="#471567"/><rect x="379.0" y="601.2" width="6.48" height="6.48" fill="#45085b"/><rect x="385.1" y="601.2" width="6.48" height="6.48" fill="#45085b"/><rect x="391.3" y="601.2" width="6.48" height="6.48" fill="#46095c"/><rect x="397.5" y="601.2" width="6.48" height="6.48" fill="#46095c"/><rect x="403.7" y="601.2" width="6.48" height="6.48" fill="#46095c"/><rect x="249.1" y="607.4" width="6.48" height="6.48" fill="#433c84"/><rect x="255.3" y="607.4" width="6.48" height="6.48" fill="#433c84"/><rect x="261.5" y="607.4" width="6.48" height="6.48" fill="#453681"/><rect x="267.7" y="607.4" width="6.48" height="6.48" fill="#482172"/><rect x="273.9" y="607.4" width="6.48" height="6.48" fill="#46095c"/><rect x="280.0" y="607.4" width="6.48" height="6.48" fill="#48196b"/><rect x="286.2" y="607.4" width="6.48" height="6.48" fill="#472b7a"/><rect x="292.4" y="607.4" width="6.48" height="6.48" fill="#424085"/><rect x="298.6" y="607.4" width="6.48" height="6.48" fill="#39558b"/><rect x="304.8" y="607.4" width="6.48" height="6.48" fill="#2f698d"/><rect x="311.0" y="607.4" width="6.48" height="6.48" fill="#287a8e"/><rect x="317.1" y="607.4" width="6.48" height="6.48" fill="#218c8d"/><rect x="323.3" y="607.4" width="6.48" height="6.48" fill="#23878d"/><rect x="329.5" y="607.4" width="6.48" height="6.48" fill="#29788e"/><rect x="335.7" y="607.4" width="6.48" height="6.48" fill="#30688d"/><rect x="341.9" y="607.4" width="6.48" height="6.48" fill="#37598c"/><rect x="348.1" y="607.4" width="6.48" height="6.48" fill="#3e4989"/><rect x="354.2" y="607.4" width="6.48" height="6.48" fill="#443781"/><rect x="360.4" y="607.4" width="6.48" height="6.48" fill="#472575"/><rect x="366.6" y="607.4" width="6.48" height="6.48" fill="#471669"/><rect x="372.8" y="607.4" width="6.48" height="6.48" fill="#470f62"/><rect x="379.0" y="607.4" width="6.48" height="6.48" fill="#45085b"/><rect x="385.1" y="607.4" width="6.48" height="6.48" fill="#46095c"/><rect x="391.3" y="607.4" width="6.48" height="6.48" fill="#460c5f"/><rect x="397.5" y="607.4" width="6.48" height="6.48" fill="#460c5f"/><rect x="403.7" y="607.4" width="6.48" height="6.48" fill="#460c5f"/><rect x="249.1" y="613.6" width="6.48" height="6.48" fill="#3f4587"/><rect x="255.3" y="613.6" width="6.48" height="6.48" fill="#3f4587"/><rect x="261.5" y="613.6" width="6.48" height="6.48" fill="#423e85"/><rect x="267.7" y="613.6" width="6.48" height="6.48" fill="#472777"/><rect x="273.9" y="613.6" width="6.48" height="6.48" fill="#460e61"/><rect x="280.0" y="613.6" width="6.48" height="6.48" fill="#471669"/><rect x="286.2" y="613.6" width="6.48" height="6.48" fill="#482172"/><rect x="292.4" y="613.6" width="6.48" height="6.48" fill="#46317e"/><rect x="298.6" y="613.6" width="6.48" height="6.48" fill="#3f4788"/><rect x="304.8" y="613.6" width="6.48" height="6.48" fill="#365a8c"/><rect x="311.0" y="613.6" width="6.48" height="6.48" fill="#2e6d8e"/><rect x="317.1" y="613.6" width="6.48" height="6.48" fill="#267f8e"/><rect x="323.3" y="613.6" width="6.48" height="6.48" fill="#26808e"/><rect x="329.5" y="613.6" width="6.48" height="6.48" fill="#287a8e"/><rect x="335.7" y="613.6" width="6.48" height="6.48" fill="#2d6f8e"/><rect x="341.9" y="613.6" width="6.48" height="6.48" fill="#355c8c"/><rect x="348.1" y="613.6" width="6.48" height="6.48" fill="#3f4788"/><rect x="354.2" y="613.6" width="6.48" height="6.48" fill="#45327f"/><rect x="360.4" y="613.6" width="6.48" height="6.48" fill="#481d6f"/><rect x="366.6" y="613.6" width="6.48" height="6.48" fill="#471265"/><rect x="372.8" y="613.6" width="6.48" height="6.48" fill="#471163"/><rect x="379.0" y="613.6" width="6.48" height="6.48" fill="#471163"/><rect x="385.1" y="613.6" width="6.48" height="6.48" fill="#471567"/><rect x="391.3" y="613.6" width="6.48" height="6.48" fill="#47186a"/><rect x="397.5" y="613.6" width="6.48" height="6.48" fill="#47186a"/><rect x="403.7" y="613.6" width="6.48" height="6.48" fill="#47186a"/><rect x="249.1" y="619.8" width="6.48" height="6.48" fill="#3d4c89"/><rect x="255.3" y="619.8" width="6.48" height="6.48" fill="#3d4c89"/><rect x="261.5" y="619.8" width="6.48" height="6.48" fill="#3f4788"/><rect x="267.7" y="619.8" width="6.48" height="6.48" fill="#46317e"/><rect x="273.9" y="619.8" width="6.48" height="6.48" fill="#481a6c"/><rect x="280.0" y="619.8" width="6.48" height="6.48" fill="#482071"/><rect x="286.2" y="619.8" width="6.48" height="6.48" fill="#472878"/><rect x="292.4" y="619.8" width="6.48" height="6.48" fill="#453580"/><rect x="298.6" y="619.8" width="6.48" height="6.48" fill="#3f4788"/><rect x="304.8" y="619.8" width="6.48" height="6.48" fill="#38568b"/><rect x="311.0" y="619.8" width="6.48" height="6.48" fill="#33608d"/><rect x="317.1" y="619.8" width="6.48" height="6.48" fill="#2e6b8e"/><rect x="323.3" y="619.8" width="6.48" height="6.48" fill="#2d6e8e"/><rect x="329.5" y="619.8" width="6.48" height="6.48" fill="#2e6d8e"/><rect x="335.7" y="619.8" width="6.48" height="6.48" fill="#2f698d"/><rect x="341.9" y="619.8" width="6.48" height="6.48" fill="#365b8c"/><rect x="348.1" y="619.8" width="6.48" height="6.48" fill="#3d4c89"/><rect x="354.2" y="619.8" width="6.48" height="6.48" fill="#433a83"/><rect x="360.4" y="619.8" width="6.48" height="6.48" fill="#472575"/><rect x="366.6" y="619.8" width="6.48" height="6.48" fill="#481e70"/><rect x="372.8" y="619.8" width="6.48" height="6.48" fill="#472676"/><rect x="379.0" y="619.8" width="6.48" height="6.48" fill="#462d7c"/><rect x="385.1" y="619.8" width="6.48" height="6.48" fill="#46307d"/><rect x="391.3" y="619.8" width="6.48" height="6.48" fill="#45347f"/><rect x="397.5" y="619.8" width="6.48" height="6.48" fill="#453580"/><rect x="403.7" y="619.8" width="6.48" height="6.48" fill="#453580"/><rect x="249.1" y="626.0" width="6.48" height="6.48" fill="#3a538b"/><rect x="255.3" y="626.0" width="6.48" height="6.48" fill="#3a538b"/><rect x="261.5" y="626.0" width="6.48" height="6.48" fill="#3c4d8a"/><rect x="267.7" y="626.0" width="6.48" height="6.48" fill="#433a83"/><rect x="273.9" y="626.0" width="6.48" height="6.48" fill="#472575"/><rect x="280.0" y="626.0" width="6.48" height="6.48" fill="#472878"/><rect x="286.2" y="626.0" width="6.48" height="6.48" fill="#46307d"/><rect x="292.4" y="626.0" width="6.48" height="6.48" fill="#433a83"/><rect x="298.6" y="626.0" width="6.48" height="6.48" fill="#3f4788"/><rect x="304.8" y="626.0" width="6.48" height="6.48" fill="#3a528b"/><rect x="311.0" y="626.0" width="6.48" height="6.48" fill="#39548b"/><rect x="317.1" y="626.0" width="6.48" height="6.48" fill="#38568b"/><rect x="323.3" y="626.0" width="6.48" height="6.48" fill="#365a8c"/><rect x="329.5" y="626.0" width="6.48" height="6.48" fill="#33608d"/><rect x="335.7" y="626.0" width="6.48" height="6.48" fill="#32628d"/><rect x="341.9" y="626.0" width="6.48" height="6.48" fill="#365a8c"/><rect x="348.1" y="626.0" width="6.48" height="6.48" fill="#3a528b"/><rect x="354.2" y="626.0" width="6.48" height="6.48" fill="#414186"/><rect x="360.4" y="626.0" width="6.48" height="6.48" fill="#472c7b"/><rect x="366.6" y="626.0" width="6.48" height="6.48" fill="#472b7a"/><rect x="372.8" y="626.0" width="6.48" height="6.48" fill="#433a83"/><rect x="379.0" y="626.0" width="6.48" height="6.48" fill="#3f4788"/><rect x="385.1" y="626.0" width="6.48" height="6.48" fill="#3d4a89"/><rect x="391.3" y="626.0" width="6.48" height="6.48" fill="#3c4d8a"/><rect x="397.5" y="626.0" width="6.48" height="6.48" fill="#3c4e8a"/><rect x="403.7" y="626.0" width="6.48" height="6.48" fill="#3c4e8a"/><rect x="249.1" y="632.1" width="6.48" height="6.48" fill="#3e4989"/><rect x="255.3" y="632.1" width="6.48" height="6.48" fill="#3e4989"/><rect x="261.5" y="632.1" width="6.48" height="6.48" fill="#404487"/><rect x="267.7" y="632.1" width="6.48" height="6.48" fill="#443982"/><rect x="273.9" y="632.1" width="6.48" height="6.48" fill="#472b7a"/><rect x="280.0" y="632.1" width="6.48" height="6.48" fill="#45347f"/><rect x="286.2" y="632.1" width="6.48" height="6.48" fill="#424085"/><rect x="292.4" y="632.1" width="6.48" height="6.48" fill="#3d4a89"/><rect x="298.6" y="632.1" width="6.48" height="6.48" fill="#39558b"/><rect x="304.8" y="632.1" width="6.48" height="6.48" fill="#345e8d"/><rect x="311.0" y="632.1" width="6.48" height="6.48" fill="#37598c"/><rect x="317.1" y="632.1" width="6.48" height="6.48" fill="#39548b"/><rect x="323.3" y="632.1" width="6.48" height="6.48" fill="#38578c"/><rect x="329.5" y="632.1" width="6.48" height="6.48" fill="#355d8c"/><rect x="335.7" y="632.1" width="6.48" height="6.48" fill="#345f8d"/><rect x="341.9" y="632.1" width="6.48" height="6.48" fill="#38568b"/><rect x="348.1" y="632.1" width="6.48" height="6.48" fill="#3c4d8a"/><rect x="354.2" y="632.1" width="6.48" height="6.48" fill="#414186"/><rect x="360.4" y="632.1" width="6.48" height="6.48" fill="#45347f"/><rect x="366.6" y="632.1" width="6.48" height="6.48" fill="#453580"/><rect x="372.8" y="632.1" width="6.48" height="6.48" fill="#404487"/><rect x="379.0" y="632.1" width="6.48" height="6.48" fill="#3a528b"/><rect x="385.1" y="632.1" width="6.48" height="6.48" fill="#37598c"/><rect x="391.3" y="632.1" width="6.48" height="6.48" fill="#33608d"/><rect x="397.5" y="632.1" width="6.48" height="6.48" fill="#32628d"/><rect x="403.7" y="632.1" width="6.48" height="6.48" fill="#32628d"/><rect x="249.1" y="638.3" width="6.48" height="6.48" fill="#433b83"/><rect x="255.3" y="638.3" width="6.48" height="6.48" fill="#433b83"/><rect x="261.5" y="638.3" width="6.48" height="6.48" fill="#433a83"/><rect x="267.7" y="638.3" width="6.48" height="6.48" fill="#453580"/><rect x="273.9" y="638.3" width="6.48" height="6.48" fill="#46317e"/><rect x="280.0" y="638.3" width="6.48" height="6.48" fill="#424085"/><rect x="286.2" y="638.3" width="6.48" height="6.48" fill="#3c4e8a"/><rect x="292.4" y="638.3" width="6.48" height="6.48" fill="#365b8c"/><rect x="298.6" y="638.3" width="6.48" height="6.48" fill="#31648d"/><rect x="304.8" y="638.3" width="6.48" height="6.48" fill="#2e6b8e"/><rect x="311.0" y="638.3" width="6.48" height="6.48" fill="#33608d"/><rect x="317.1" y="638.3" width="6.48" height="6.48" fill="#39558b"/><rect x="323.3" y="638.3" width="6.48" height="6.48" fill="#38568b"/><rect x="329.5" y="638.3" width="6.48" height="6.48" fill="#365b8c"/><rect x="335.7" y="638.3" width="6.48" height="6.48" fill="#355c8c"/><rect x="341.9" y="638.3" width="6.48" height="6.48" fill="#3a528b"/><rect x="348.1" y="638.3" width="6.48" height="6.48" fill="#3f4788"/><rect x="354.2" y="638.3" width="6.48" height="6.48" fill="#414186"/><rect x="360.4" y="638.3" width="6.48" height="6.48" fill="#433b83"/><rect x="366.6" y="638.3" width="6.48" height="6.48" fill="#424085"/><rect x="372.8" y="638.3" width="6.48" height="6.48" fill="#3c4e8a"/><rect x="379.0" y="638.3" width="6.48" height="6.48" fill="#365b8c"/><rect x="385.1" y="638.3" width="6.48" height="6.48" fill="#31668d"/><rect x="391.3" y="638.3" width="6.48" height="6.48" fill="#2c718e"/><rect x="397.5" y="638.3" width="6.48" height="6.48" fill="#2b748e"/><rect x="403.7" y="638.3" width="6.48" height="6.48" fill="#2b748e"/><rect x="249.1" y="644.5" width="6.48" height="6.48" fill="#462d7c"/><rect x="255.3" y="644.5" width="6.48" height="6.48" fill="#462d7c"/><rect x="261.5" y="644.5" width="6.48" height="6.48" fill="#462d7c"/><rect x="267.7" y="644.5" width="6.48" height="6.48" fill="#46307d"/><rect x="273.9" y="644.5" width="6.48" height="6.48" fill="#46317e"/><rect x="280.0" y="644.5" width="6.48" height="6.48" fill="#404487"/><rect x="286.2" y="644.5" width="6.48" height="6.48" fill="#38578c"/><rect x="292.4" y="644.5" width="6.48" height="6.48" fill="#31648d"/><rect x="298.6" y="644.5" width="6.48" height="6.48" fill="#2d6e8e"/><rect x="304.8" y="644.5" width="6.48" height="6.48" fill="#2a758e"/><rect x="311.0" y="644.5" width="6.48" height="6.48" fill="#32628d"/><rect x="317.1" y="644.5" width="6.48" height="6.48" fill="#3c4e8a"/><rect x="323.3" y="644.5" width="6.48" height="6.48" fill="#3b508a"/><rect x="329.5" y="644.5" width="6.48" height="6.48" fill="#37588c"/><rect x="335.7" y="644.5" width="6.48" height="6.48" fill="#365a8c"/><rect x="341.9" y="644.5" width="6.48" height="6.48" fill="#3d4c89"/><rect x="348.1" y="644.5" width="6.48" height="6.48" fill="#423d84"/><rect x="354.2" y="644.5" width="6.48" height="6.48" fill="#443982"/><rect x="360.4" y="644.5" width="6.48" height="6.48" fill="#453580"/><rect x="366.6" y="644.5" width="6.48" height="6.48" fill="#433c84"/><rect x="372.8" y="644.5" width="6.48" height="6.48" fill="#3d4b89"/><rect x="379.0" y="644.5" width="6.48" height="6.48" fill="#365a8c"/><rect x="385.1" y="644.5" width="6.48" height="6.48" fill="#31658d"/><rect x="391.3" y="644.5" width="6.48" height="6.48" fill="#2c718e"/><rect x="397.5" y="644.5" width="6.48" height="6.48" fill="#2b748e"/><rect x="403.7" y="644.5" width="6.48" height="6.48" fill="#2b748e"/><rect x="249.1" y="650.7" width="6.48" height="6.48" fill="#482071"/><rect x="255.3" y="650.7" width="6.48" height="6.48" fill="#482071"/><rect x="261.5" y="650.7" width="6.48" height="6.48" fill="#482172"/><rect x="267.7" y="650.7" width="6.48" height="6.48" fill="#472777"/><rect x="273.9" y="650.7" width="6.48" height="6.48" fill="#462d7c"/><rect x="280.0" y="650.7" width="6.48" height="6.48" fill="#404387"/><rect x="286.2" y="650.7" width="6.48" height="6.48" fill="#37588c"/><rect x="292.4" y="650.7" width="6.48" height="6.48" fill="#30688d"/><rect x="298.6" y="650.7" width="6.48" height="6.48" fill="#2b748e"/><rect x="304.8" y="650.7" width="6.48" height="6.48" fill="#277c8e"/><rect x="311.0" y="650.7" width="6.48" height="6.48" fill="#345f8d"/><rect x="317.1" y="650.7" width="6.48" height="6.48" fill="#424085"/><rect x="323.3" y="650.7" width="6.48" height="6.48" fill="#414286"/><rect x="329.5" y="650.7" width="6.48" height="6.48" fill="#39548b"/><rect x="335.7" y="650.7" width="6.48" height="6.48" fill="#37598c"/><rect x="341.9" y="650.7" width="6.48" height="6.48" fill="#404487"/><rect x="348.1" y="650.7" width="6.48" height="6.48" fill="#462d7c"/><rect x="354.2" y="650.7" width="6.48" height="6.48" fill="#472777"/><rect x="360.4" y="650.7" width="6.48" height="6.48" fill="#482273"/><rect x="366.6" y="650.7" width="6.48" height="6.48" fill="#472a79"/><rect x="372.8" y="650.7" width="6.48" height="6.48" fill="#423d84"/><rect x="379.0" y="650.7" width="6.48" height="6.48" fill="#3c4e8a"/><rect x="385.1" y="650.7" width="6.48" height="6.48" fill="#38578c"/><rect x="391.3" y="650.7" width="6.48" height="6.48" fill="#345f8d"/><rect x="397.5" y="650.7" width="6.48" height="6.48" fill="#32628d"/><rect x="403.7" y="650.7" width="6.48" height="6.48" fill="#32628d"/><rect x="249.1" y="656.9" width="6.48" height="6.48" fill="#471265"/><rect x="255.3" y="656.9" width="6.48" height="6.48" fill="#471265"/><rect x="261.5" y="656.9" width="6.48" height="6.48" fill="#471567"/><rect x="267.7" y="656.9" width="6.48" height="6.48" fill="#481e70"/><rect x="273.9" y="656.9" width="6.48" height="6.48" fill="#472878"/><rect x="280.0" y="656.9" width="6.48" height="6.48" fill="#424085"/><rect x="286.2" y="656.9" width="6.48" height="6.48" fill="#38568b"/><rect x="292.4" y="656.9" width="6.48" height="6.48" fill="#30678d"/><rect x="298.6" y="656.9" width="6.48" height="6.48" fill="#2a768e"/><rect x="304.8" y="656.9" width="6.48" height="6.48" fill="#277e8e"/><rect x="311.0" y="656.9" width="6.48" height="6.48" fill="#365a8c"/><rect x="317.1" y="656.9" width="6.48" height="6.48" fill="#46317e"/><rect x="323.3" y="656.9" width="6.48" height="6.48" fill="#453681"/><rect x="329.5" y="656.9" width="6.48" height="6.48" fill="#3b508a"/><rect x="335.7" y="656.9" width="6.48" height="6.48" fill="#37588c"/><rect x="341.9" y="656.9" width="6.48" height="6.48" fill="#423d84"/><rect x="348.1" y="656.9" width="6.48" height="6.48" fill="#482071"/><rect x="354.2" y="656.9" width="6.48" height="6.48" fill="#471669"/><rect x="360.4" y="656.9" width="6.48" height="6.48" fill="#470f62"/><rect x="366.6" y="656.9" width="6.48" height="6.48" fill="#47186a"/><rect x="372.8" y="656.9" width="6.48" height="6.48" fill="#462d7c"/><rect x="379.0" y="656.9" width="6.48" height="6.48" fill="#414286"/><rect x="385.1" y="656.9" width="6.48" height="6.48" fill="#3e4888"/><rect x="391.3" y="656.9" width="6.48" height="6.48" fill="#3c4e8a"/><rect x="397.5" y="656.9" width="6.48" height="6.48" fill="#3b508a"/><rect x="403.7" y="656.9" width="6.48" height="6.48" fill="#3b508a"/><rect x="249.1" y="663.1" width="6.48" height="6.48" fill="#470f62"/><rect x="255.3" y="663.1" width="6.48" height="6.48" fill="#470f62"/><rect x="261.5" y="663.1" width="6.48" height="6.48" fill="#471163"/><rect x="267.7" y="663.1" width="6.48" height="6.48" fill="#47186a"/><rect x="273.9" y="663.1" width="6.48" height="6.48" fill="#481d6f"/><rect x="280.0" y="663.1" width="6.48" height="6.48" fill="#472a79"/><rect x="286.2" y="663.1" width="6.48" height="6.48" fill="#443781"/><rect x="292.4" y="663.1" width="6.48" height="6.48" fill="#414286"/><rect x="298.6" y="663.1" width="6.48" height="6.48" fill="#3d4b89"/><rect x="304.8" y="663.1" width="6.48" height="6.48" fill="#3a528b"/><rect x="311.0" y="663.1" width="6.48" height="6.48" fill="#423d84"/><rect x="317.1" y="663.1" width="6.48" height="6.48" fill="#472777"/><rect x="323.3" y="663.1" width="6.48" height="6.48" fill="#453681"/><rect x="329.5" y="663.1" width="6.48" height="6.48" fill="#3a538b"/><rect x="335.7" y="663.1" width="6.48" height="6.48" fill="#355c8c"/><rect x="341.9" y="663.1" width="6.48" height="6.48" fill="#423d84"/><rect x="348.1" y="663.1" width="6.48" height="6.48" fill="#481a6c"/><rect x="354.2" y="663.1" width="6.48" height="6.48" fill="#471265"/><rect x="360.4" y="663.1" width="6.48" height="6.48" fill="#460c5f"/><rect x="366.6" y="663.1" width="6.48" height="6.48" fill="#471265"/><rect x="372.8" y="663.1" width="6.48" height="6.48" fill="#482172"/><rect x="379.0" y="663.1" width="6.48" height="6.48" fill="#462f7c"/><rect x="385.1" y="663.1" width="6.48" height="6.48" fill="#443982"/><rect x="391.3" y="663.1" width="6.48" height="6.48" fill="#414186"/><rect x="397.5" y="663.1" width="6.48" height="6.48" fill="#404487"/><rect x="403.7" y="663.1" width="6.48" height="6.48" fill="#404487"/><rect x="249.1" y="669.2" width="6.48" height="6.48" fill="#460c5f"/><rect x="255.3" y="669.2" width="6.48" height="6.48" fill="#460c5f"/><rect x="261.5" y="669.2" width="6.48" height="6.48" fill="#460c5f"/><rect x="267.7" y="669.2" width="6.48" height="6.48" fill="#470f62"/><rect x="273.9" y="669.2" width="6.48" height="6.48" fill="#471265"/><rect x="280.0" y="669.2" width="6.48" height="6.48" fill="#471466"/><rect x="286.2" y="669.2" width="6.48" height="6.48" fill="#471567"/><rect x="292.4" y="669.2" width="6.48" height="6.48" fill="#471669"/><rect x="298.6" y="669.2" width="6.48" height="6.48" fill="#48196b"/><rect x="304.8" y="669.2" width="6.48" height="6.48" fill="#481c6e"/><rect x="311.0" y="669.2" width="6.48" height="6.48" fill="#481d6f"/><rect x="317.1" y="669.2" width="6.48" height="6.48" fill="#481d6f"/><rect x="323.3" y="669.2" width="6.48" height="6.48" fill="#453681"/><rect x="329.5" y="669.2" width="6.48" height="6.48" fill="#38568b"/><rect x="335.7" y="669.2" width="6.48" height="6.48" fill="#33608d"/><rect x="341.9" y="669.2" width="6.48" height="6.48" fill="#423d84"/><rect x="348.1" y="669.2" width="6.48" height="6.48" fill="#471567"/><rect x="354.2" y="669.2" width="6.48" height="6.48" fill="#460e61"/><rect x="360.4" y="669.2" width="6.48" height="6.48" fill="#46095c"/><rect x="366.6" y="669.2" width="6.48" height="6.48" fill="#460b5e"/><rect x="372.8" y="669.2" width="6.48" height="6.48" fill="#471466"/><rect x="379.0" y="669.2" width="6.48" height="6.48" fill="#481a6c"/><rect x="385.1" y="669.2" width="6.48" height="6.48" fill="#472777"/><rect x="391.3" y="669.2" width="6.48" height="6.48" fill="#45347f"/><rect x="397.5" y="669.2" width="6.48" height="6.48" fill="#443781"/><rect x="403.7" y="669.2" width="6.48" height="6.48" fill="#443781"/><rect x="249.1" y="675.4" width="6.48" height="6.48" fill="#460b5e"/><rect x="255.3" y="675.4" width="6.48" height="6.48" fill="#460b5e"/><rect x="261.5" y="675.4" width="6.48" height="6.48" fill="#460c5f"/><rect x="267.7" y="675.4" width="6.48" height="6.48" fill="#460e61"/><rect x="273.9" y="675.4" width="6.48" height="6.48" fill="#470f62"/><rect x="280.0" y="675.4" width="6.48" height="6.48" fill="#460c5f"/><rect x="286.2" y="675.4" width="6.48" height="6.48" fill="#46095c"/><rect x="292.4" y="675.4" width="6.48" height="6.48" fill="#45085b"/><rect x="298.6" y="675.4" width="6.48" height="6.48" fill="#45085b"/><rect x="304.8" y="675.4" width="6.48" height="6.48" fill="#45085b"/><rect x="311.0" y="675.4" width="6.48" height="6.48" fill="#471265"/><rect x="317.1" y="675.4" width="6.48" height="6.48" fill="#481a6c"/><rect x="323.3" y="675.4" width="6.48" height="6.48" fill="#453681"/><rect x="329.5" y="675.4" width="6.48" height="6.48" fill="#38578c"/><rect x="335.7" y="675.4" width="6.48" height="6.48" fill="#33618d"/><rect x="341.9" y="675.4" width="6.48" height="6.48" fill="#423d84"/><rect x="348.1" y="675.4" width="6.48" height="6.48" fill="#471466"/><rect x="354.2" y="675.4" width="6.48" height="6.48" fill="#460c5f"/><rect x="360.4" y="675.4" width="6.48" height="6.48" fill="#46095c"/><rect x="366.6" y="675.4" width="6.48" height="6.48" fill="#46095c"/><rect x="372.8" y="675.4" width="6.48" height="6.48" fill="#460e61"/><rect x="379.0" y="675.4" width="6.48" height="6.48" fill="#471466"/><rect x="385.1" y="675.4" width="6.48" height="6.48" fill="#482273"/><rect x="391.3" y="675.4" width="6.48" height="6.48" fill="#46307d"/><rect x="397.5" y="675.4" width="6.48" height="6.48" fill="#45347f"/><rect x="403.7" y="675.4" width="6.48" height="6.48" fill="#45347f"/><rect x="249.1" y="681.6" width="6.48" height="6.48" fill="#460b5e"/><rect x="255.3" y="681.6" width="6.48" height="6.48" fill="#460b5e"/><rect x="261.5" y="681.6" width="6.48" height="6.48" fill="#460c5f"/><rect x="267.7" y="681.6" width="6.48" height="6.48" fill="#460e61"/><rect x="273.9" y="681.6" width="6.48" height="6.48" fill="#470f62"/><rect x="280.0" y="681.6" width="6.48" height="6.48" fill="#460c5f"/><rect x="286.2" y="681.6" width="6.48" height="6.48" fill="#46095c"/><rect x="292.4" y="681.6" width="6.48" height="6.48" fill="#45085b"/><rect x="298.6" y="681.6" width="6.48" height="6.48" fill="#45085b"/><rect x="304.8" y="681.6" width="6.48" height="6.48" fill="#45085b"/><rect x="311.0" y="681.6" width="6.48" height="6.48" fill="#471265"/><rect x="317.1" y="681.6" width="6.48" height="6.48" fill="#481a6c"/><rect x="323.3" y="681.6" width="6.48" height="6.48" fill="#453681"/><rect x="329.5" y="681.6" width="6.48" height="6.48" fill="#38578c"/><rect x="335.7" y="681.6" width="6.48" height="6.48" fill="#33618d"/><rect x="341.9" y="681.6" width="6.48" height="6.48" fill="#423d84"/><rect x="348.1" y="681.6" width="6.48" height="6.48" fill="#471466"/><rect x="354.2" y="681.6" width="6.48" height="6.48" fill="#460c5f"/><rect x="360.4" y="681.6" width="6.48" height="6.48" fill="#46095c"/><rect x="366.6" y="681.6" width="6.48" height="6.48" fill="#46095c"/><rect x="372.8" y="681.6" width="6.48" height="6.48" fill="#460e61"/><rect x="379.0" y="681.6" width="6.48" height="6.48" fill="#471466"/><rect x="385.1" y="681.6" width="6.48" height="6.48" fill="#482273"/><rect x="391.3" y="681.6" width="6.48" height="6.48" fill="#46307d"/><rect x="397.5" y="681.6" width="6.48" height="6.48" fill="#45347f"/><rect x="403.7" y="681.6" width="6.48" height="6.48" fill="#45347f"/></g>
</g>
<rect x="280.1" y="558" width="98.8" height="97.7" fill="none" stroke="#ff0000" stroke-width="1.6"/>
<path d="M328.6,569.3 V599.8 M328.6,614.4 V643.8 M292,606.5 H322.5 M336,606.5 H366.5" stroke="#ff0000" stroke-width="1.3"/>
<text x="328.6" y="546.3" font-family="'Liberation Sans', sans-serif" font-size="10.5" text-anchor="middle" fill="#ff0000">N</text>
<text x="265.0" y="610.2" font-family="'Liberation Sans', sans-serif" font-size="10.5" text-anchor="middle" fill="#ff0000">E</text>
<rect x="255.3" y="533.2" width="148.4" height="147.1" fill="none" stroke="#222" stroke-width="1"/>
<line x1="262.6" y1="680.3" x2="262.6" y2="683.8" stroke="#222" stroke-width="0.8"/>
<text x="259.3" y="695.1" font-family="'Liberation Sans', sans-serif" font-size="11.8" text-anchor="middle" fill="#111">−4</text>
<line x1="251.8" y1="672.5" x2="255.3" y2="672.5" stroke="#222" stroke-width="0.8"/>
<text x="250.3" y="676.7" font-family="'Liberation Sans', sans-serif" font-size="11.8" text-anchor="end" fill="#111">−4</text>
<line x1="295.6" y1="680.3" x2="295.6" y2="683.8" stroke="#222" stroke-width="0.8"/>
<text x="292.3" y="695.1" font-family="'Liberation Sans', sans-serif" font-size="11.8" text-anchor="middle" fill="#111">−2</text>
<line x1="251.8" y1="639.5" x2="255.3" y2="639.5" stroke="#222" stroke-width="0.8"/>
<text x="250.3" y="643.7" font-family="'Liberation Sans', sans-serif" font-size="11.8" text-anchor="end" fill="#111">−2</text>
<line x1="328.6" y1="680.3" x2="328.6" y2="683.8" stroke="#222" stroke-width="0.8"/>
<text x="328.6" y="695.1" font-family="'Liberation Sans', sans-serif" font-size="11.8" text-anchor="middle" fill="#111">0</text>
<line x1="251.8" y1="606.5" x2="255.3" y2="606.5" stroke="#222" stroke-width="0.8"/>
<text x="250.3" y="610.7" font-family="'Liberation Sans', sans-serif" font-size="11.8" text-anchor="end" fill="#111">0</text>
<line x1="361.6" y1="680.3" x2="361.6" y2="683.8" stroke="#222" stroke-width="0.8"/>
<text x="361.6" y="695.1" font-family="'Liberation Sans', sans-serif" font-size="11.8" text-anchor="middle" fill="#111">2</text>
<line x1="251.8" y1="573.5" x2="255.3" y2="573.5" stroke="#222" stroke-width="0.8"/>
<text x="250.3" y="577.7" font-family="'Liberation Sans', sans-serif" font-size="11.8" text-anchor="end" fill="#111">2</text>
<line x1="394.6" y1="680.3" x2="394.6" y2="683.8" stroke="#222" stroke-width="0.8"/>
<text x="394.6" y="695.1" font-family="'Liberation Sans', sans-serif" font-size="11.8" text-anchor="middle" fill="#111">4</text>
<line x1="251.8" y1="540.5" x2="255.3" y2="540.5" stroke="#222" stroke-width="0.8"/>
<text x="250.3" y="544.7" font-family="'Liberation Sans', sans-serif" font-size="11.8" text-anchor="end" fill="#111">4</text>
<text x="328.6" y="705.8" font-family="'Liberation Sans', sans-serif" font-size="11.2" text-anchor="middle" textLength="101.0" lengthAdjust="spacingAndGlyphs" fill="#111">s/b: 0.56 +/- 0.086</text>
<text x="514.4" y="525.8" font-family="'Liberation Sans', sans-serif" font-size="13.4" text-anchor="middle" textLength="75.0" lengthAdjust="spacingAndGlyphs" fill="#111">HSC(26.2) r</text>
<g clip-path="url(#clipHSC)">
<rect x="440.8" y="532.6" width="147.5" height="147.5" fill="#cfcfcf" filter="url(#nzL)"/>
<circle cx="507" cy="571" r="40" fill="#000" opacity="0.2" filter="url(#blur3)"/>
<circle cx="507" cy="571" r="33" fill="#000" opacity="0.45" filter="url(#blur3)"/>
<circle cx="507" cy="570.5" r="27" fill="#000" filter="url(#blur1)"/>
</g>
<rect x="465.3" y="557.4" width="98.2" height="97.9" fill="none" stroke="#ff0000" stroke-width="1.6"/>
<circle cx="506.9" cy="570.4" r="25.3" fill="none" stroke="#ffc107" stroke-width="1.4"/>
<rect x="500.2" y="564.7" width="12.3" height="12.3" fill="none" stroke="#0000ff" stroke-width="1.4"/>
<path d="M514.4,570 V598.2 M514.4,613.6 V644.2 M477.8,606.5 H507.3 M521.5,606.5 H551.7" stroke="#ff0000" stroke-width="1.3"/>
<text x="513.9" y="545.6" font-family="'Liberation Sans', sans-serif" font-size="10.5" text-anchor="middle" fill="#ff0000">N</text>
<text x="450.7" y="610.2" font-family="'Liberation Sans', sans-serif" font-size="10.5" text-anchor="middle" fill="#ff0000">E</text>
<rect x="440.8" y="532.6" width="147.5" height="147.5" fill="none" stroke="#222" stroke-width="1"/>
<line x1="448.8" y1="680.1" x2="448.8" y2="683.6" stroke="#222" stroke-width="0.8"/>
<text x="445.5" y="694.9" font-family="'Liberation Sans', sans-serif" font-size="11.8" text-anchor="middle" fill="#111">−4</text>
<line x1="437.3" y1="672.1" x2="440.8" y2="672.1" stroke="#222" stroke-width="0.8"/>
<text x="435.8" y="676.3" font-family="'Liberation Sans', sans-serif" font-size="11.8" text-anchor="end" fill="#111">−4</text>
<line x1="481.6" y1="680.1" x2="481.6" y2="683.6" stroke="#222" stroke-width="0.8"/>
<text x="478.3" y="694.9" font-family="'Liberation Sans', sans-serif" font-size="11.8" text-anchor="middle" fill="#111">−2</text>
<line x1="437.3" y1="639.3" x2="440.8" y2="639.3" stroke="#222" stroke-width="0.8"/>
<text x="435.8" y="643.5" font-family="'Liberation Sans', sans-serif" font-size="11.8" text-anchor="end" fill="#111">−2</text>
<line x1="514.4" y1="680.1" x2="514.4" y2="683.6" stroke="#222" stroke-width="0.8"/>
<text x="514.4" y="694.9" font-family="'Liberation Sans', sans-serif" font-size="11.8" text-anchor="middle" fill="#111">0</text>
<line x1="437.3" y1="606.5" x2="440.8" y2="606.5" stroke="#222" stroke-width="0.8"/>
<text x="435.8" y="610.7" font-family="'Liberation Sans', sans-serif" font-size="11.8" text-anchor="end" fill="#111">0</text>
<line x1="547.2" y1="680.1" x2="547.2" y2="683.6" stroke="#222" stroke-width="0.8"/>
<text x="547.2" y="694.9" font-family="'Liberation Sans', sans-serif" font-size="11.8" text-anchor="middle" fill="#111">2</text>
<line x1="437.3" y1="573.7" x2="440.8" y2="573.7" stroke="#222" stroke-width="0.8"/>
<text x="435.8" y="577.9" font-family="'Liberation Sans', sans-serif" font-size="11.8" text-anchor="end" fill="#111">2</text>
<line x1="580.0" y1="680.1" x2="580.0" y2="683.6" stroke="#222" stroke-width="0.8"/>
<text x="580.0" y="694.9" font-family="'Liberation Sans', sans-serif" font-size="11.8" text-anchor="middle" fill="#111">4</text>
<line x1="437.3" y1="540.9" x2="440.8" y2="540.9" stroke="#222" stroke-width="0.8"/>
<text x="435.8" y="545.1" font-family="'Liberation Sans', sans-serif" font-size="11.8" text-anchor="end" fill="#111">4</text>
<text x="514.4" y="705.6" font-family="'Liberation Sans', sans-serif" font-size="11.2" text-anchor="middle" textLength="120.0" lengthAdjust="spacingAndGlyphs" fill="#111">m:17.3  re:1.5"  s:2.3"</text>
<text x="514.4" y="718.6" font-family="'Liberation Sans', sans-serif" font-size="11.2" text-anchor="middle" textLength="103.0" lengthAdjust="spacingAndGlyphs" fill="#111">EWr: 0. PLAE: 1000</text>
<text x="70.6" y="785.7" font-family="'Liberation Mono', monospace" font-size="14.0" textLength="78.0" lengthAdjust="spacingAndGlyphs" stroke="#000" stroke-width="0.22">Separation</text>
<text x="70.6" y="800.6" font-family="'Liberation Mono', monospace" font-size="14.0" textLength="85.8" lengthAdjust="spacingAndGlyphs" stroke="#000" stroke-width="0.22">Match score</text>
<text x="70.6" y="815.7" font-family="'Liberation Mono', monospace" font-size="14.0" textLength="54.6" lengthAdjust="spacingAndGlyphs" stroke="#000" stroke-width="0.22">RA, Dec</text>
<text x="70.6" y="830.0" font-family="'Liberation Mono', monospace" font-size="14.0" textLength="46.8" lengthAdjust="spacingAndGlyphs" stroke="#000" stroke-width="0.22">Spec z</text>
<text x="70.6" y="844.3" font-family="'Liberation Mono', monospace" font-size="14.0" textLength="54.6" lengthAdjust="spacingAndGlyphs" stroke="#000" stroke-width="0.22">Photo z</text>
<text x="70.6" y="859.1" font-family="'Liberation Mono', monospace" font-size="14.0" textLength="117.0" lengthAdjust="spacingAndGlyphs" stroke="#000" stroke-width="0.22">Est LyA rest-EW</text>
<text x="70.6" y="873.4" font-family="'Liberation Mono', monospace" font-size="14.0" textLength="23.4" lengthAdjust="spacingAndGlyphs" stroke="#000" stroke-width="0.22">mag</text>
<text x="70.6" y="888.6" font-family="'Liberation Mono', monospace" font-size="14.0" textLength="101.4" lengthAdjust="spacingAndGlyphs" stroke="#000" stroke-width="0.22">P(LAE)/P(OII)</text>
<text x="287.1" y="778.6" font-family="'Liberation Mono', monospace" font-size="14.0" textLength="62.4" lengthAdjust="spacingAndGlyphs" fill="#0000ee" stroke="#0000ee" stroke-width="0.22">2.24773"</text>
<text x="287.1" y="793.4" font-family="'Liberation Mono', monospace" font-size="14.0" textLength="39.0" lengthAdjust="spacingAndGlyphs" fill="#0000ee" stroke="#0000ee" stroke-width="0.22">1.000</text>
<text x="287.1" y="808.0" font-family="'Liberation Mono', monospace" font-size="14.0" textLength="163.8" lengthAdjust="spacingAndGlyphs" fill="#0000ee" stroke="#0000ee" stroke-width="0.22">200.170568, 55.743614</text>
<text x="287.1" y="822.9" font-family="'Liberation Mono', monospace" font-size="14.0" textLength="23.4" lengthAdjust="spacingAndGlyphs" fill="#0000ee" stroke="#0000ee" stroke-width="0.22">N/A</text>
<text x="287.1" y="837.7" font-family="'Liberation Mono', monospace" font-size="14.0" textLength="23.4" lengthAdjust="spacingAndGlyphs" fill="#0000ee" stroke="#0000ee" stroke-width="0.22">N/A</text>
<text x="287.1" y="854.3" font-family="'Liberation Mono', monospace" font-size="14.0" textLength="93.6" lengthAdjust="spacingAndGlyphs" fill="#0000ee" stroke="#0000ee" stroke-width="0.22">0.17(±0.06)Å</text>
<text x="287.1" y="870.0" font-family="'Liberation Mono', monospace" font-size="14.0" textLength="148.2" lengthAdjust="spacingAndGlyphs" fill="#0000ee" stroke="#0000ee" stroke-width="0.22">17.36(17.35,17.36)R</text>
<text x="287.1" y="886.5" font-family="'Liberation Mono', monospace" font-size="14.0" textLength="31.2" lengthAdjust="spacingAndGlyphs" fill="#0000ee" stroke="#0000ee" stroke-width="0.22">1000</text>
<text x="325.0" y="881.2" font-family="'Liberation Sans', sans-serif" font-size="8.6" textLength="22.0" lengthAdjust="spacingAndGlyphs" fill="#0000ee">1000</text>
<text x="325.0" y="890.1" font-family="'Liberation Sans', sans-serif" font-size="8.6" textLength="22.0" lengthAdjust="spacingAndGlyphs" fill="#0000ee">1000</text>
<text x="938.3" y="821.8" font-family="'Liberation Mono', monospace" font-size="14.0" textLength="203.0" lengthAdjust="spacingAndGlyphs" stroke="#000" stroke-width="0.22">Phot z plot not available.</text>
</svg>
</body></html>
